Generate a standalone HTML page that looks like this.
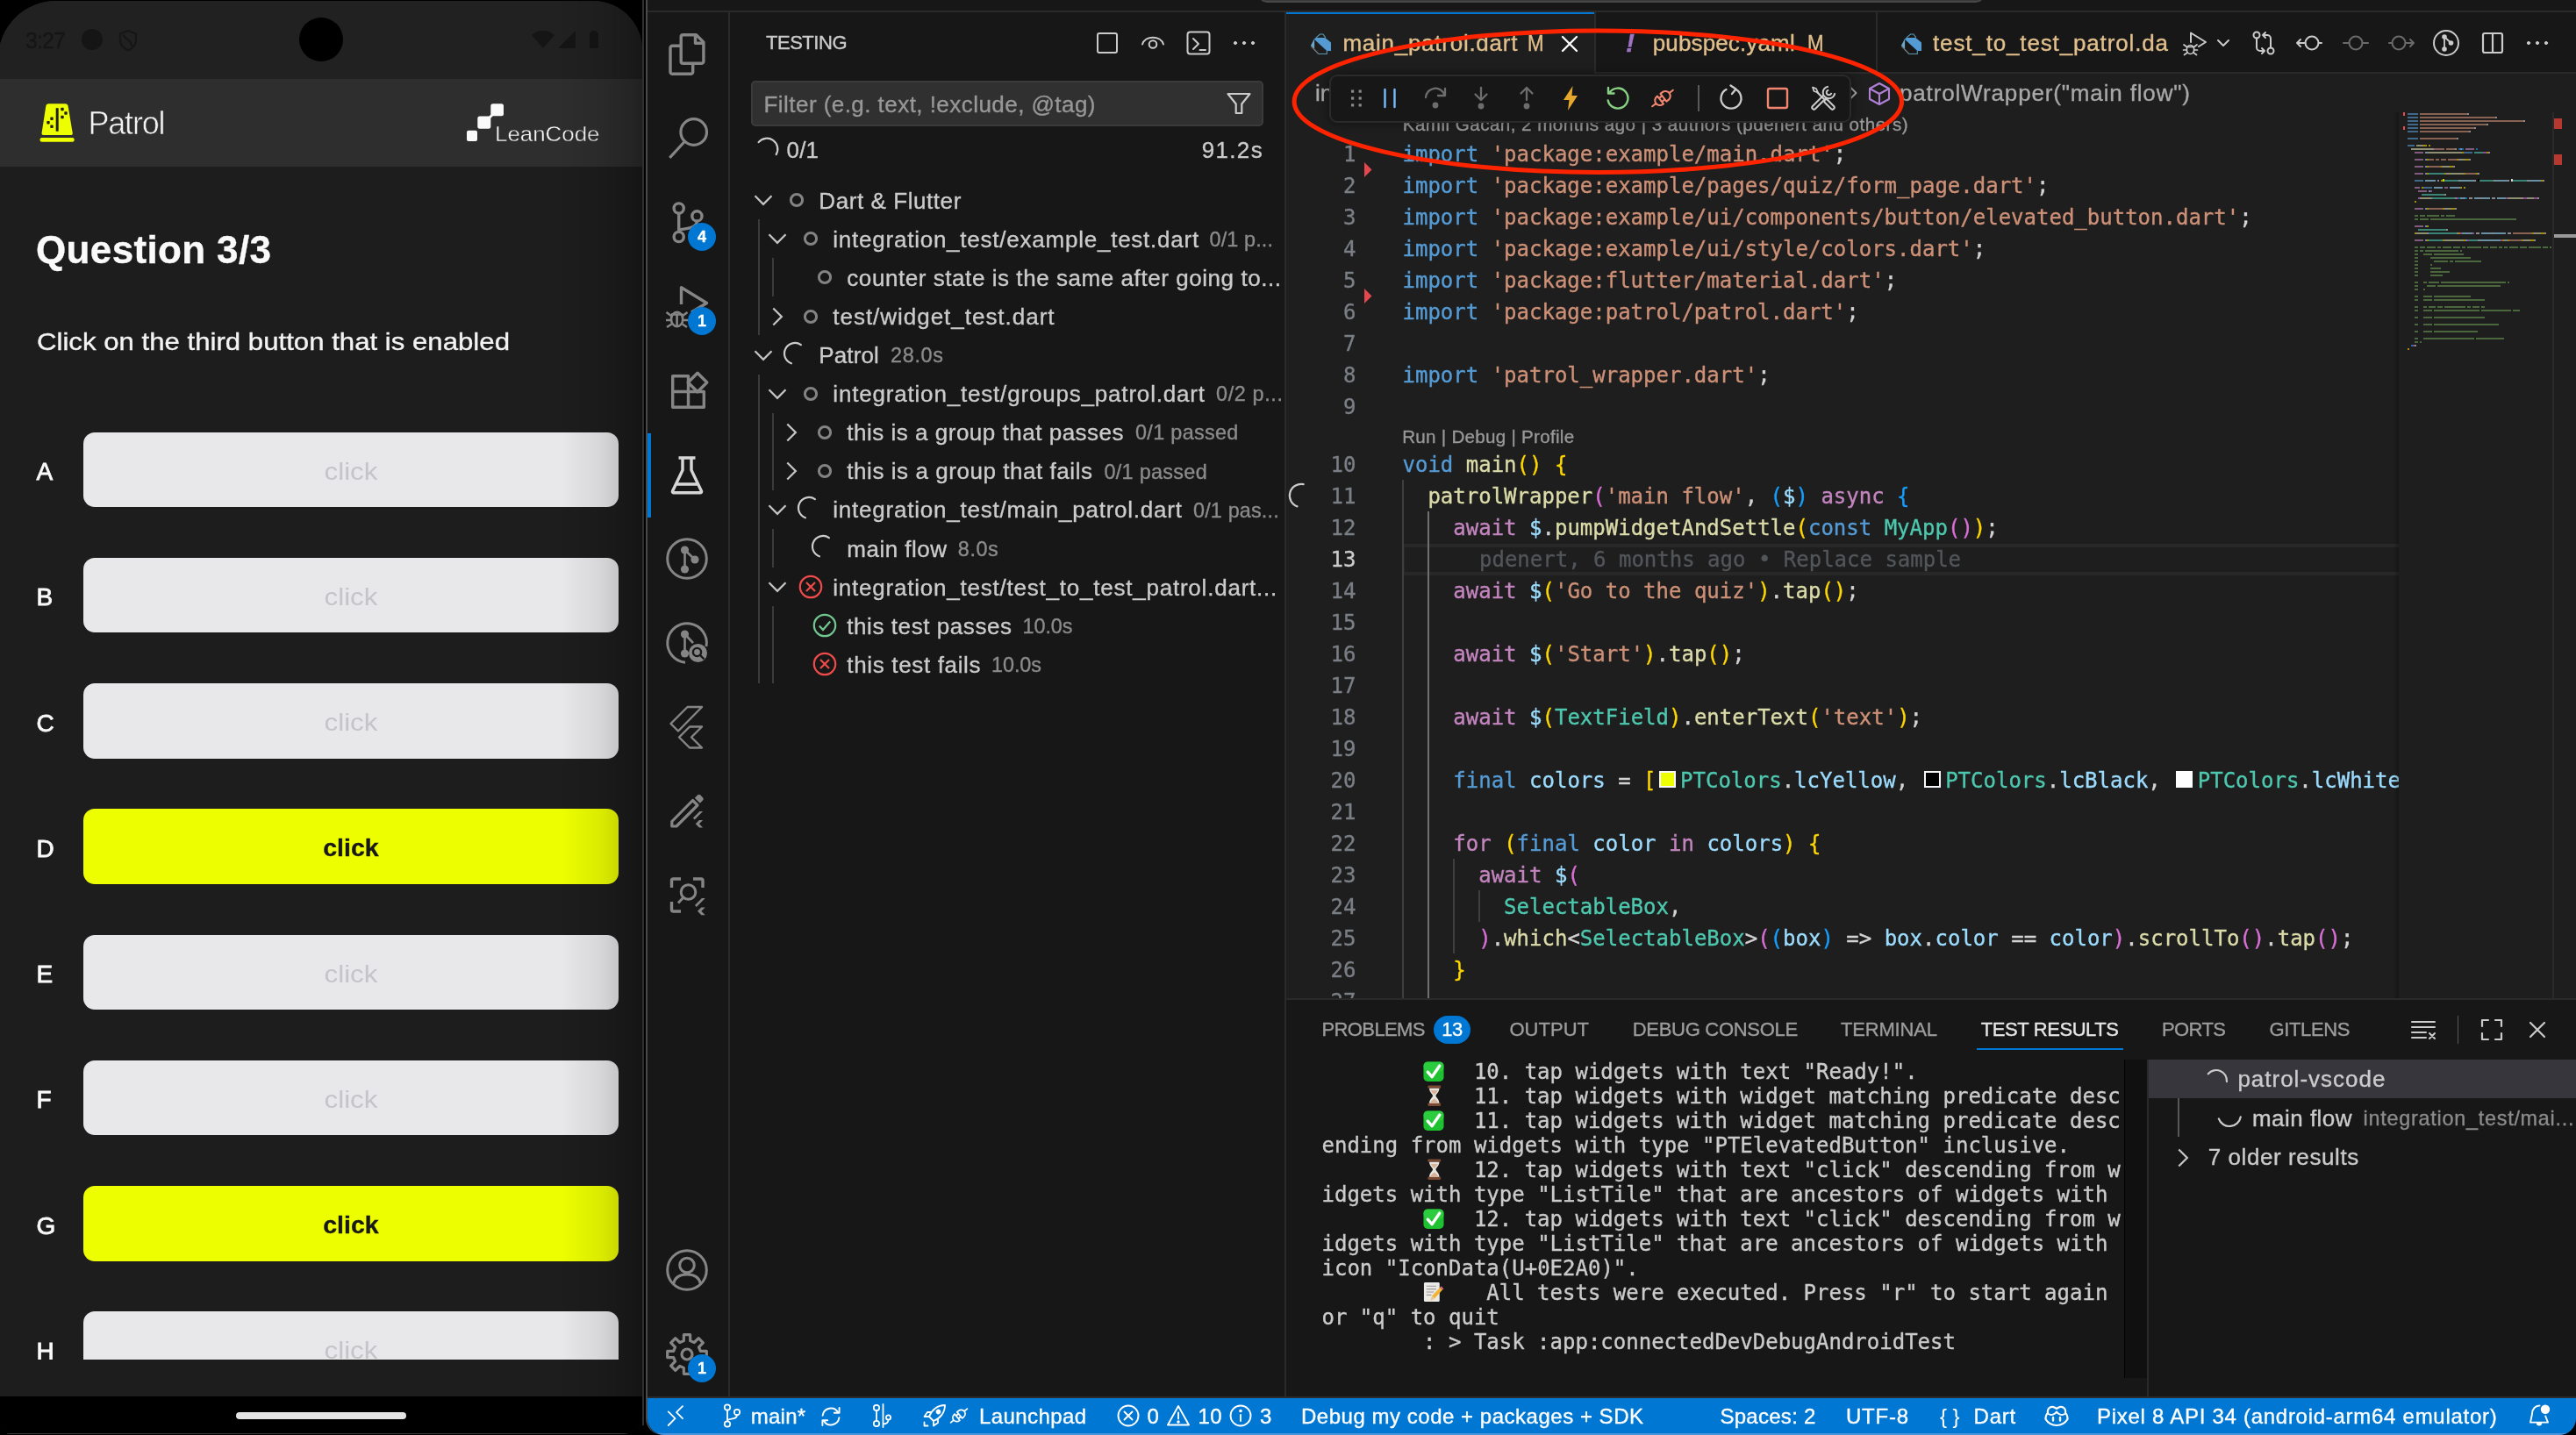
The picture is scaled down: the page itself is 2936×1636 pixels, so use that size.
<!DOCTYPE html>
<html lang="en"><head><meta charset="utf-8"><title>Patrol VS Code extension</title>
<style>
*{box-sizing:border-box;margin:0;padding:0}
html,body{width:2936px;height:1636px;overflow:hidden;background:#000}
body{position:relative;font-family:"Liberation Sans","DejaVu Sans",sans-serif;-webkit-font-smoothing:antialiased}
.t{position:absolute;white-space:pre;line-height:1;-webkit-text-stroke:.35px currentColor}
.r{position:absolute}
.i{position:absolute;overflow:visible}
#root{position:absolute;left:0;top:0;width:2936px;height:1636px;overflow:hidden;will-change:transform;opacity:.999}
#phone{position:absolute;left:-2px;top:1px;width:734px;height:1634px;border-radius:66px 56px 22px 14px;overflow:hidden;background:#1e1e1e}
#phone>*{margin-left:2px;margin-top:-1px}
#win{position:absolute;left:736px;top:0;width:2200px;height:1636px;background:#181818;border-left:2px solid #4a4b4d;border-radius:0 0 19px 19px;overflow:hidden}
</style></head>
<body>
<div id="root">
<div id="phone">
<div class="r" style="left:0px;top:0px;width:736px;height:90px;background:#222222;"></div>
<div class="r" style="left:0px;top:90px;width:736px;height:100px;background:#2f2f2f;"></div>
<div class="t" style="top:33.84px;font-size:25px;color:#171717;letter-spacing:-0.886px;left:29.00px;">3:27</div>
<div class="r" style="left:93px;top:33px;width:24px;height:24px;border-radius:50%;background:#161616"></div>
<svg class="i" style="left:133.00px;top:33.00px;" width="26" height="26" viewBox="0 0 26 26" fill="none"><path d="M13 2 L22 5.5 V13 C22 18 18 22 13 24.5 C8 22 4 18 4 13 V5.5 Z" stroke="#171717" stroke-width="2.2" fill="none"/><path d="M8 6.5 C8 12 18 12 17 20" stroke="#171717" stroke-width="2.2" fill="none"/></svg>
<svg class="i" style="left:605.00px;top:31.00px;" width="28" height="28" viewBox="0 0 28 28" fill="none"><path d="M1 9 C8 2 20 2 27 9 L14 24 Z" fill="#161616"/></svg>
<svg class="i" style="left:634.00px;top:33.00px;" width="24" height="24" viewBox="0 0 24 24" fill="none"><path d="M2 22 L22 2 V22 Z" fill="#161616"/></svg>
<svg class="i" style="left:665.00px;top:33.00px;" width="24" height="24" viewBox="0 0 24 24" fill="none"><path d="M7 4 H9 V2 H15 V4 H17 V22 H7 Z" fill="#161616"/></svg>
<div class="r" style="left:341px;top:20px;width:50px;height:50px;border-radius:50%;background:#000"></div>
<svg class="i" style="left:40px;top:112px" width="52" height="56" viewBox="40 112 52 56"><path d="M55.5 118.2 H74.4 Q77 118.2 77.6 121 L82.8 152 Q83 154 81 154 H49.3 Q47.3 154 47.5 152 L52.3 121 Q52.8 118.2 55.5 118.2 Z" fill="#eeff00"/><rect x="45.5" y="157" width="39.2" height="4.8" rx="2.2" fill="#eeff00"/><rect x="63.7" y="123.2" width="3" height="26.5" fill="#222"/><g fill="#222"><rect x="69.3" y="122.8" width="3.4" height="3.4" rx=".8"/><rect x="73.3" y="127.3" width="3.4" height="3.4" rx=".8"/><rect x="69.3" y="131.8" width="3.4" height="3.4" rx=".8"/><rect x="57.3" y="133.6" width="3.4" height="3.4" rx=".8"/><rect x="53.3" y="138" width="3.4" height="3.4" rx=".8"/><rect x="57.3" y="142.6" width="3.4" height="3.4" rx=".8"/></g></svg>
<div class="t" style="top:122.83px;font-size:36px;color:#f4f4f4;letter-spacing:-1.209px;left:100.50px;-webkit-text-stroke:0.6px #2f2f2f;">Patrol</div>
<svg class="i" style="left:528px;top:114px" width="50" height="52" viewBox="528 114 50 52" fill="#fbfbfb"><rect x="532" y="148.7" width="12" height="12.3" rx="2"/><rect x="544.3" y="132.5" width="15" height="14.3" rx="2.5"/><rect x="559.3" y="118.3" width="14.7" height="14" rx="2.5"/><path d="M556 134 L561 129 L563 131 L558 136 Z"/></svg>
<div class="t" style="top:141.18px;font-size:24px;color:#f4f4f4;transform:scaleX(1.0788);transform-origin:left center;left:564.00px;-webkit-text-stroke:0.4px #2f2f2f;">LeanCode</div>
<div class="r" style="left:0px;top:190px;width:736px;height:1402px;background:#1e1e1e;"></div>
<div class="t" style="top:263.05px;font-size:44px;color:#fbfbfb;font-weight:700;letter-spacing:0.358px;left:41.00px;">Question 3/3</div>
<div class="t" style="top:375.90px;font-size:28px;color:#f4f4f4;transform:scaleX(1.1134);transform-origin:left center;left:41.50px;">Click on the third button that is enabled</div>
<div class="r" style="left:0;top:460px;width:736px;height:1090px;overflow:hidden">
<div class="r" style="left:95px;top:32.60px;width:610px;height:85.6px;border-radius:13px;background:#e9e9ec"></div>
<div class="t" style="top:63.70px;font-size:28px;color:#c6c6ca;transform:scaleX(1.1205);transform-origin:center center;left:-200.00px;width:1200px;text-align:center;-webkit-text-stroke:0;">click</div>
<div class="t" style="top:64.20px;font-size:28px;color:#fbfbfb;left:41.50px;-webkit-text-stroke:.8px #fbfbfb;">A</div>
<div class="r" style="left:95px;top:175.85px;width:610px;height:85.6px;border-radius:13px;background:#e9e9ec"></div>
<div class="t" style="top:206.95px;font-size:28px;color:#c6c6ca;transform:scaleX(1.1205);transform-origin:center center;left:-200.00px;width:1200px;text-align:center;-webkit-text-stroke:0;">click</div>
<div class="t" style="top:207.45px;font-size:28px;color:#fbfbfb;left:41.50px;-webkit-text-stroke:.8px #fbfbfb;">B</div>
<div class="r" style="left:95px;top:319.10px;width:610px;height:85.6px;border-radius:13px;background:#e9e9ec"></div>
<div class="t" style="top:350.20px;font-size:28px;color:#c6c6ca;transform:scaleX(1.1205);transform-origin:center center;left:-200.00px;width:1200px;text-align:center;-webkit-text-stroke:0;">click</div>
<div class="t" style="top:350.70px;font-size:28px;color:#fbfbfb;left:41.50px;-webkit-text-stroke:.8px #fbfbfb;">C</div>
<div class="r" style="left:95px;top:462.35px;width:610px;height:85.6px;border-radius:13px;background:#eeff00"></div>
<div class="t" style="top:492.95px;font-size:28px;color:#191919;font-weight:700;transform:scaleX(1.0197);transform-origin:center center;left:-200.00px;width:1200px;text-align:center;">click</div>
<div class="t" style="top:493.95px;font-size:28px;color:#fbfbfb;left:41.50px;-webkit-text-stroke:.8px #fbfbfb;">D</div>
<div class="r" style="left:95px;top:605.60px;width:610px;height:85.6px;border-radius:13px;background:#e9e9ec"></div>
<div class="t" style="top:636.70px;font-size:28px;color:#c6c6ca;transform:scaleX(1.1205);transform-origin:center center;left:-200.00px;width:1200px;text-align:center;-webkit-text-stroke:0;">click</div>
<div class="t" style="top:637.20px;font-size:28px;color:#fbfbfb;left:41.50px;-webkit-text-stroke:.8px #fbfbfb;">E</div>
<div class="r" style="left:95px;top:748.85px;width:610px;height:85.6px;border-radius:13px;background:#e9e9ec"></div>
<div class="t" style="top:779.95px;font-size:28px;color:#c6c6ca;transform:scaleX(1.1205);transform-origin:center center;left:-200.00px;width:1200px;text-align:center;-webkit-text-stroke:0;">click</div>
<div class="t" style="top:780.45px;font-size:28px;color:#fbfbfb;left:41.50px;-webkit-text-stroke:.8px #fbfbfb;">F</div>
<div class="r" style="left:95px;top:892.10px;width:610px;height:85.6px;border-radius:13px;background:#eeff00"></div>
<div class="t" style="top:922.70px;font-size:28px;color:#191919;font-weight:700;transform:scaleX(1.0197);transform-origin:center center;left:-200.00px;width:1200px;text-align:center;">click</div>
<div class="t" style="top:923.70px;font-size:28px;color:#fbfbfb;left:41.50px;-webkit-text-stroke:.8px #fbfbfb;">G</div>
<div class="r" style="left:95px;top:1035.35px;width:610px;height:85.6px;border-radius:13px;background:#e9e9ec"></div>
<div class="t" style="top:1066.45px;font-size:28px;color:#c6c6ca;transform:scaleX(1.1205);transform-origin:center center;left:-200.00px;width:1200px;text-align:center;-webkit-text-stroke:0;">click</div>
<div class="t" style="top:1066.95px;font-size:28px;color:#fbfbfb;left:41.50px;-webkit-text-stroke:.8px #fbfbfb;">H</div>
</div>
<div class="r" style="left:640px;top:0;width:96px;height:1592px;background:linear-gradient(to right,rgba(0,0,0,0) 0%,rgba(0,0,0,.07) 45%,rgba(0,0,0,.2) 85%,rgba(0,0,0,.32) 100%)"></div>
<div class="r" style="left:0px;top:1592px;width:736px;height:44px;background:#000;"></div>
<div class="r" style="left:269px;top:1610px;width:194px;height:8px;border-radius:4px;background:#e4e4e4"></div>
<div class="r" style="left:8px;top:1634px;width:716px;height:3px;background:#3a3a3a;"></div>
</div>
<div class="r" style="left:732px;top:0px;width:2px;height:1625px;background:#303030;"></div>
<div id="win"></div>
<div class="r" style="left:738px;top:12px;width:2198px;height:2px;background:#2b2b2b;"></div>
<div class="r" style="left:1434px;top:-30px;width:828px;height:33px;border-radius:10px;background:#3a3a3a;border:2px solid #484848"></div>
<div class="r" style="left:830px;top:14px;width:2px;height:1578px;background:#2b2b2b;"></div>
<div class="r" style="left:738px;top:494px;width:4px;height:96px;background:#0078d4;"></div>
<svg class="i" style="left:759px;top:38px" width="48" height="48" viewBox="0 0 48 48" fill="none" stroke="#868686" stroke-width="3.4" stroke-linejoin="round" stroke-linecap="butt"><path d="M17 14.3 H7.3 a2.3 2.3 0 0 0 -2.3 2.3 V44 a2.3 2.3 0 0 0 2.3 2.3 H28.4 a2.3 2.3 0 0 0 2.3 -2.3 V34.5"/><path d="M19.5 1.7 H34.5 L42.9 10.1 V32 a2.3 2.3 0 0 1 -2.3 2.3 H19.5 a2.3 2.3 0 0 1 -2.3 -2.3 V4 a2.3 2.3 0 0 1 2.3 -2.3 Z"/><path d="M33.5 2 V11.3 H42.5"/></svg>
<svg class="i" style="left:759px;top:133px" width="48" height="48" viewBox="0 0 48 48" fill="none" stroke="#868686" stroke-width="3.4" stroke-linejoin="round" stroke-linecap="butt"><circle cx="31.7" cy="17.5" r="14.8" stroke-width="3.2"/><path d="M21.2 28.5 L4.3 46.8" stroke-width="3.2"/></svg>
<svg class="i" style="left:759px;top:229px" width="48" height="48" viewBox="0 0 48 48" fill="none" stroke="#868686" stroke-width="3.4" stroke-linejoin="round" stroke-linecap="butt"><circle cx="14.7" cy="8.5" r="5.6"/><circle cx="14.7" cy="41" r="5.6"/><circle cx="35.4" cy="17.4" r="5.6"/><path d="M14.7 14.1 V35.4"/><path d="M35.4 23 C35.4 30 28 31 14.7 33"/></svg>
<div class="r" style="left:784px;top:254px;width:32px;height:32px;border-radius:50%;background:#0078d4"></div><div class="t" style="top:261.36px;font-size:18px;color:#fff;font-weight:700;left:200.00px;width:1200px;text-align:center;">4</div>
<svg class="i" style="left:759px;top:325px" width="48" height="48" viewBox="0 0 48 48" fill="none" stroke="#868686" stroke-width="3.4" stroke-linejoin="round" stroke-linecap="butt"><path d="M17.5 22 V2.8 L46.5 20.5 L29 31"/><g stroke-width="2.6"><ellipse cx="12.6" cy="39" rx="6.6" ry="8.2"/><path d="M6 33.5 H19.2 M0.5 31 L6 35 M24.5 31 L19.2 35 M0 40 H6 M19.2 40 H25 M1 48 L6.5 44.5 M24 48 L18.7 44.5 M12.6 33.5 V47"/></g></svg>
<div class="r" style="left:784px;top:350px;width:32px;height:32px;border-radius:50%;background:#0078d4"></div><div class="t" style="top:357.36px;font-size:18px;color:#fff;font-weight:700;left:200.00px;width:1200px;text-align:center;">1</div>
<svg class="i" style="left:759px;top:421px" width="48" height="48" viewBox="0 0 48 48" fill="none" stroke="#868686" stroke-width="3.4" stroke-linejoin="round" stroke-linecap="butt"><path d="M7.7 7.7 H25.5 V25.5 H43.3 V43.3 H7.7 Z M7.7 25.5 H25.5 V43.3"/><path d="M36 4.2 L46.8 15 L36 25.8 L25.2 15 Z"/></svg>
<svg class="i" style="left:759px;top:517px" width="48" height="48" viewBox="0 0 48 48" fill="none" stroke="#d7d7d7" stroke-width="3.4" stroke-linejoin="round" stroke-linecap="butt"><path d="M14.5 5 H33.5 M19 5 V19 L7.5 43 a1.2 1.2 0 0 0 1 1.7 H39.5 a1.2 1.2 0 0 0 1 -1.7 L29 19 V5 M11.5 35 H36.5"/></svg>
<svg class="i" style="left:759px;top:613px" width="48" height="48" viewBox="0 0 48 48" fill="none" stroke="#868686" stroke-width="3.4" stroke-linejoin="round" stroke-linecap="butt"><circle cx="24" cy="24" r="22.3" stroke-width="3"/><g fill="#868686" stroke="none"><circle cx="21.5" cy="14" r="4.6"/><circle cx="21.5" cy="36" r="4.6"/><circle cx="33" cy="25" r="4.6"/></g><path d="M21.5 14 V36 M21.5 14 L33 25" stroke-width="2.6"/></svg>
<svg class="i" style="left:759px;top:709px" width="48" height="48" viewBox="0 0 48 48" fill="none" stroke="#868686" stroke-width="3.4" stroke-linejoin="round" stroke-linecap="butt"><path d="M46 28 A22.3 22.3 0 1 0 22 46.2" stroke-width="3"/><g fill="#868686" stroke="none"><circle cx="21.5" cy="14" r="4.6"/><circle cx="21.5" cy="36" r="4.6"/></g><path d="M21.5 14 V36 M21.5 14 L31 24" stroke-width="2.6"/><circle cx="36.5" cy="35.5" r="10.5" fill="#868686" stroke="none"/><circle cx="35.5" cy="34.5" r="4.6" stroke="#181818" stroke-width="2.4"/><path d="M39 38 L43.5 42.5" stroke="#181818" stroke-width="2.4"/></svg>
<svg class="i" style="left:759px;top:806px" width="48" height="48" viewBox="0 0 48 48" fill="none" stroke="#868686" stroke-width="3.4" stroke-linejoin="round" stroke-linecap="butt"><path d="M24.5 2 H41 L14 29.5 L5.5 21 Z M27 24.5 H41 L29 36.5 L41 48.5 H27 L15 36.5 Z" stroke-width="2.4" transform="translate(0 -2)"/></svg>
<svg class="i" style="left:759px;top:901px" width="48" height="48" viewBox="0 0 48 48" fill="none" stroke="#868686" stroke-width="3.4" stroke-linejoin="round" stroke-linecap="butt"><path d="M6.8 35.5 L30.5 11.5 L36 17 L12 41 H6.8 Z" stroke-width="3.2"/><path d="M32.8 8.8 L36 5.6 a2.4 2.4 0 0 1 3.4 0 L42 8.2 a2.4 2.4 0 0 1 0 3.4 L38.8 14.8 Z" fill="#868686" stroke="none"/><g transform="translate(29 24) scale(1.05)" fill="#868686" stroke="none"><path d="M9 0 L12.5 0 L3.5 9 L1.8 7.2 Z"/><path d="M8.5 9.5 L12.5 9.5 L8.5 13.5 L12.5 17.5 L8.5 17.5 L4.5 13.5 Z"/></g></svg>
<svg class="i" style="left:759px;top:996px" width="48" height="48" viewBox="0 0 48 48" fill="none" stroke="#868686" stroke-width="3.4" stroke-linejoin="round" stroke-linecap="butt"><path d="M6.5 16 V8 a2 2 0 0 1 2 -2 H17 M31 6 H40 a2 2 0 0 1 2 2 V16 M6.5 32 V41 a2 2 0 0 0 2 2 H17" stroke-width="3.4"/><circle cx="25.5" cy="21" r="8.3" stroke-width="3"/><path d="M19.5 27.5 L14 33.5" stroke-width="3"/><g transform="translate(31 28) scale(1.1)" fill="#868686" stroke="none"><path d="M9 0 L12.5 0 L3.5 9 L1.8 7.2 Z"/><path d="M8.5 9.5 L12.5 9.5 L8.5 13.5 L12.5 17.5 L8.5 17.5 L4.5 13.5 Z"/></g></svg>
<svg class="i" style="left:759px;top:1424px" width="48" height="48" viewBox="0 0 48 48" fill="none" stroke="#868686" stroke-width="3.4" stroke-linejoin="round" stroke-linecap="butt"><circle cx="24" cy="24" r="22.3" stroke-width="3"/><circle cx="24" cy="18.5" r="8.3" stroke-width="3"/><path d="M8.5 40 C10 31.5 17 29 24 29 C31 29 38 31.5 39.5 40" stroke-width="3"/></svg>
<svg class="i" style="left:759px;top:1520px" width="48" height="48" viewBox="0 0 48 48" fill="none" stroke="#868686" stroke-width="3.4" stroke-linejoin="round" stroke-linecap="butt"><path d="M20.40 1.69 L27.60 1.69 L27.72 8.64 L32.23 10.51 L37.23 5.68 L42.32 10.77 L37.49 15.77 L39.36 20.28 L46.31 20.40 L46.31 27.60 L39.36 27.72 L37.49 32.23 L42.32 37.23 L37.23 42.32 L32.23 37.49 L27.72 39.36 L27.60 46.31 L20.40 46.31 L20.28 39.36 L15.77 37.49 L10.77 42.32 L5.68 37.23 L10.51 32.23 L8.64 27.72 L1.69 27.60 L1.69 20.40 L8.64 20.28 L10.51 15.77 L5.68 10.77 L10.77 5.68 L15.77 10.51 L20.28 8.64 Z" stroke-width="3.2"/><circle cx="24" cy="24" r="6" stroke-width="3.2"/></svg>
<div class="r" style="left:784px;top:1544px;width:32px;height:32px;border-radius:50%;background:#0078d4"></div><div class="t" style="top:1551.36px;font-size:18px;color:#fff;font-weight:700;left:200.00px;width:1200px;text-align:center;">1</div>
<div class="r" style="left:1464px;top:14px;width:2px;height:1578px;background:#2b2b2b;"></div>
<div class="t" style="top:38.38px;font-size:22px;color:#cccccc;letter-spacing:-0.473px;left:873.00px;">TESTING</div>
<svg class="i" style="left:1246px;top:32.7px" width="32" height="32" viewBox="-16 -16 32 32" fill="none" stroke="#cccccc" stroke-width="2" stroke-linejoin="round" stroke-linecap="round"><rect x="-11" y="-11" width="22" height="22" rx="2"/></svg>
<svg class="i" style="left:1298px;top:32.7px" width="32" height="32" viewBox="-16 -16 32 32" fill="none" stroke="#cccccc" stroke-width="2" stroke-linejoin="round" stroke-linecap="round"><path d="M-12 1.5 C-9 -9 9 -9 12 1.5"/><circle cx="0" cy="1.5" r="4.3"/></svg>
<svg class="i" style="left:1350px;top:32.7px" width="32" height="32" viewBox="-16 -16 32 32" fill="none" stroke="#cccccc" stroke-width="2" stroke-linejoin="round" stroke-linecap="round"><rect x="-12.5" y="-12.5" width="25" height="25" rx="3"/><path d="M-6 -5 L0 1 L-6 7 M1.5 8 H8"/></svg>
<svg class="i" style="left:1402px;top:32.7px" width="32" height="32" viewBox="-16 -16 32 32" fill="none" stroke="#cccccc" stroke-width="1" stroke-linejoin="round" stroke-linecap="round"><circle cx="-10" r="1.6" fill="#ccc"/><circle r="1.6" fill="#ccc"/><circle cx="10" r="1.6" fill="#ccc"/></svg>
<div class="r" style="left:856px;top:92px;width:584px;height:52px;border-radius:5px;background:#313131;border:2px solid #3c3c3c"></div>
<div class="t" style="top:106.49px;font-size:26px;color:#989898;letter-spacing:0.452px;left:870.50px;">Filter (e.g. text, !exclude, @tag)</div>
<svg class="i" style="left:1396px;top:102px" width="32" height="32" viewBox="-16 -16 32 32" fill="none" stroke="#cccccc" stroke-width="2.2" stroke-linejoin="round"><path d="M-12.5 -11 H12.5 L3.3 0.5 V11 H-3.3 V0.5 Z"/></svg>
<svg class="i" style="left:857.5px;top:154px" width="32" height="32" viewBox="-16 -16 32 32" fill="none" stroke="#cccccc" stroke-width="2.2" stroke-linecap="round"><path d="M-9.42 -7.91 A12.3 12.3 0 0 1 10.65 6.15"/></svg>
<div class="t" style="top:158.49px;font-size:26px;color:#cccccc;letter-spacing:0.178px;left:896.50px;">0/1</div>
<div class="t" style="top:158.49px;font-size:26px;color:#cccccc;letter-spacing:1.349px;right:1496.00px;">91.2s</div>
<div class="r" style="left:864px;top:250px;width:2px;height:132px;background:#3c3c3c;"></div>
<div class="r" style="left:880px;top:294px;width:2px;height:44px;background:#3c3c3c;"></div>
<div class="r" style="left:864px;top:427px;width:2px;height:352px;background:#3c3c3c;"></div>
<div class="r" style="left:880px;top:471px;width:2px;height:88px;background:#3c3c3c;"></div>
<div class="r" style="left:880px;top:603px;width:2px;height:44px;background:#3c3c3c;"></div>
<div class="r" style="left:880px;top:691px;width:2px;height:88px;background:#3c3c3c;"></div>
<svg class="i" style="left:854px;top:212.2px" width="32" height="32" viewBox="-16 -16 32 32" fill="none" stroke="#c5c5c5" stroke-width="2.3" stroke-linejoin="miter"><path d="M-9.5 -4.7 L0 4.8 L9.5 -4.7"/></svg>
<svg class="i" style="left:896px;top:216.2px" width="24" height="24" viewBox="-12 -12 24 24" fill="none" stroke="#848484" stroke-width="3"><circle r="6.6"/></svg>
<div class="t" style="top:215.69px;font-size:26px;color:#cccccc;letter-spacing:0.570px;left:933.30px;">Dart &amp; Flutter</div>
<svg class="i" style="left:870px;top:256.3px" width="32" height="32" viewBox="-16 -16 32 32" fill="none" stroke="#c5c5c5" stroke-width="2.3" stroke-linejoin="miter"><path d="M-9.5 -4.7 L0 4.8 L9.5 -4.7"/></svg>
<svg class="i" style="left:912px;top:260.3px" width="24" height="24" viewBox="-12 -12 24 24" fill="none" stroke="#848484" stroke-width="3"><circle r="6.6"/></svg>
<div class="t" style="top:259.79px;font-size:26px;color:#cccccc;letter-spacing:0.764px;left:949.30px;">integration_test/example_test.dart</div>
<div class="t" style="top:261.99px;font-size:23.4px;color:#8c8c8c;letter-spacing:0.122px;left:1378.60px;">0/1 p...</div>
<svg class="i" style="left:928px;top:304.4px" width="24" height="24" viewBox="-12 -12 24 24" fill="none" stroke="#848484" stroke-width="3"><circle r="6.6"/></svg>
<div class="t" style="top:303.89px;font-size:26px;color:#cccccc;letter-spacing:0.561px;left:965.30px;">counter state is the same after going to...</div>
<svg class="i" style="left:870px;top:344.5px" width="32" height="32" viewBox="-16 -16 32 32" fill="none" stroke="#c5c5c5" stroke-width="2.3" stroke-linejoin="miter"><path d="M-4.7 -9.5 L4.8 0 L-4.7 9.5"/></svg>
<svg class="i" style="left:912px;top:348.5px" width="24" height="24" viewBox="-12 -12 24 24" fill="none" stroke="#848484" stroke-width="3"><circle r="6.6"/></svg>
<div class="t" style="top:347.99px;font-size:26px;color:#cccccc;letter-spacing:0.976px;left:949.30px;">test/widget_test.dart</div>
<svg class="i" style="left:854px;top:388.6px" width="32" height="32" viewBox="-16 -16 32 32" fill="none" stroke="#c5c5c5" stroke-width="2.3" stroke-linejoin="miter"><path d="M-9.5 -4.7 L0 4.8 L9.5 -4.7"/></svg>
<svg class="i" style="left:890px;top:386.6px" width="32" height="32" viewBox="-16 -16 32 32" fill="none" stroke="#cccccc" stroke-width="2.2" stroke-linecap="round"><path d="M-4.10 11.28 A12 12 0 1 1 6.88 -9.83"/></svg>
<div class="t" style="top:392.09px;font-size:26px;color:#cccccc;letter-spacing:0.116px;left:933.30px;">Patrol</div>
<div class="t" style="top:394.29px;font-size:23.4px;color:#8c8c8c;letter-spacing:0.689px;left:1015.00px;">28.0s</div>
<svg class="i" style="left:870px;top:432.7px" width="32" height="32" viewBox="-16 -16 32 32" fill="none" stroke="#c5c5c5" stroke-width="2.3" stroke-linejoin="miter"><path d="M-9.5 -4.7 L0 4.8 L9.5 -4.7"/></svg>
<svg class="i" style="left:912px;top:436.7px" width="24" height="24" viewBox="-12 -12 24 24" fill="none" stroke="#848484" stroke-width="3"><circle r="6.6"/></svg>
<div class="t" style="top:436.19px;font-size:26px;color:#cccccc;letter-spacing:0.814px;left:949.30px;">integration_test/groups_patrol.dart</div>
<div class="t" style="top:438.39px;font-size:23.4px;color:#8c8c8c;letter-spacing:0.636px;left:1386.00px;">0/2 p...</div>
<svg class="i" style="left:886px;top:476.8px" width="32" height="32" viewBox="-16 -16 32 32" fill="none" stroke="#c5c5c5" stroke-width="2.3" stroke-linejoin="miter"><path d="M-4.7 -9.5 L4.8 0 L-4.7 9.5"/></svg>
<svg class="i" style="left:928px;top:480.8px" width="24" height="24" viewBox="-12 -12 24 24" fill="none" stroke="#848484" stroke-width="3"><circle r="6.6"/></svg>
<div class="t" style="top:480.29px;font-size:26px;color:#cccccc;letter-spacing:0.509px;left:965.30px;">this is a group that passes</div>
<div class="t" style="top:482.49px;font-size:23.4px;color:#8c8c8c;letter-spacing:0.324px;left:1294.00px;">0/1 passed</div>
<svg class="i" style="left:886px;top:520.9px" width="32" height="32" viewBox="-16 -16 32 32" fill="none" stroke="#c5c5c5" stroke-width="2.3" stroke-linejoin="miter"><path d="M-4.7 -9.5 L4.8 0 L-4.7 9.5"/></svg>
<svg class="i" style="left:928px;top:524.9px" width="24" height="24" viewBox="-12 -12 24 24" fill="none" stroke="#848484" stroke-width="3"><circle r="6.6"/></svg>
<div class="t" style="top:524.39px;font-size:26px;color:#cccccc;letter-spacing:0.551px;left:965.30px;">this is a group that fails</div>
<div class="t" style="top:526.59px;font-size:23.4px;color:#8c8c8c;letter-spacing:0.301px;left:1258.50px;">0/1 passed</div>
<svg class="i" style="left:870px;top:565.0px" width="32" height="32" viewBox="-16 -16 32 32" fill="none" stroke="#c5c5c5" stroke-width="2.3" stroke-linejoin="miter"><path d="M-9.5 -4.7 L0 4.8 L9.5 -4.7"/></svg>
<svg class="i" style="left:906px;top:563.0px" width="32" height="32" viewBox="-16 -16 32 32" fill="none" stroke="#cccccc" stroke-width="2.2" stroke-linecap="round"><path d="M-4.10 11.28 A12 12 0 1 1 6.88 -9.83"/></svg>
<div class="t" style="top:568.49px;font-size:26px;color:#cccccc;letter-spacing:0.775px;left:949.30px;">integration_test/main_patrol.dart</div>
<div class="t" style="top:570.69px;font-size:23.4px;color:#8c8c8c;letter-spacing:0.160px;left:1360.00px;">0/1 pas...</div>
<svg class="i" style="left:922px;top:607.1px" width="32" height="32" viewBox="-16 -16 32 32" fill="none" stroke="#cccccc" stroke-width="2.2" stroke-linecap="round"><path d="M-4.10 11.28 A12 12 0 1 1 6.88 -9.83"/></svg>
<div class="t" style="top:612.59px;font-size:26px;color:#cccccc;letter-spacing:0.486px;left:965.30px;">main flow</div>
<div class="t" style="top:614.79px;font-size:23.4px;color:#8c8c8c;letter-spacing:0.590px;left:1091.80px;">8.0s</div>
<svg class="i" style="left:870px;top:653.2px" width="32" height="32" viewBox="-16 -16 32 32" fill="none" stroke="#c5c5c5" stroke-width="2.3" stroke-linejoin="miter"><path d="M-9.5 -4.7 L0 4.8 L9.5 -4.7"/></svg>
<svg class="i" style="left:908px;top:653.2px" width="32" height="32" viewBox="-16 -16 32 32" fill="none" stroke="#f14c4c" stroke-width="2.2"><circle r="12.2"/><path d="M-5 -5 L5 5 M5 -5 L-5 5"/></svg>
<div class="t" style="top:656.69px;font-size:26px;color:#cccccc;letter-spacing:0.776px;left:949.30px;">integration_test/test_to_test_patrol.dart...</div>
<svg class="i" style="left:924px;top:697.3px" width="32" height="32" viewBox="-16 -16 32 32" fill="none" stroke="#73c991" stroke-width="2.2"><circle r="12.2"/><path d="M-6.2 0.5 L-2 5 L6.2 -4.5"/></svg>
<div class="t" style="top:700.79px;font-size:26px;color:#cccccc;letter-spacing:0.567px;left:965.30px;">this test passes</div>
<div class="t" style="top:702.99px;font-size:23.4px;color:#8c8c8c;letter-spacing:-0.086px;left:1165.60px;">10.0s</div>
<svg class="i" style="left:924px;top:741.4000000000001px" width="32" height="32" viewBox="-16 -16 32 32" fill="none" stroke="#f14c4c" stroke-width="2.2"><circle r="12.2"/><path d="M-5 -5 L5 5 M5 -5 L-5 5"/></svg>
<div class="t" style="top:744.89px;font-size:26px;color:#cccccc;letter-spacing:0.654px;left:965.30px;">this test fails</div>
<div class="t" style="top:747.09px;font-size:23.4px;color:#8c8c8c;letter-spacing:-0.061px;left:1130.00px;">10.0s</div>
<div class="r" style="left:1466px;top:84px;width:1470px;height:1055px;background:#1f1f1f;"></div>
<div class="r" style="left:1466px;top:82px;width:1470px;height:2px;background:#2b2b2b;"></div>
<div class="r" style="left:1466px;top:14px;width:351px;height:70px;background:#1f1f1f;"></div>
<div class="r" style="left:1466px;top:14px;width:351px;height:2px;background:#0078d4;"></div>
<div class="r" style="left:1817px;top:14px;width:2px;height:70px;background:#2b2b2b;"></div>
<div class="r" style="left:2138px;top:14px;width:2px;height:70px;background:#2b2b2b;"></div>
<svg class="i" style="left:1489.5px;top:35.5px" width="32" height="30" viewBox="1490 34 32 30"><path d="M1493.9 50.1 L1498.1 42 L1498.1 54.3 Z" fill="#6aa9cc"/><path d="M1498.1 42 L1500 40.9 H1510.3 L1517 46.4 V55.9 H1512.3 L1498.1 43 Z" fill="#559bd4"/><path d="M1500 40.9 L1504.5 37 H1508 L1510.8 40.9 M1498.1 54.3 L1502.8 59.5 H1512.3 V55.9" fill="none" stroke="#5a9bb3" stroke-width="1.1"/><path d="M1494.5 51 L1502.8 59.5" fill="none" stroke="#6f6f6f" stroke-width="1.1"/></svg>
<div class="t" style="top:36.49px;font-size:26px;color:#e2c08d;letter-spacing:0.741px;left:1530.40px;">main_patrol.dart</div>
<div class="t" style="top:36.49px;font-size:26px;color:#e2c08d;transform:scaleX(0.8588);transform-origin:left center;left:1741.00px;">M</div>
<svg class="i" style="left:1773.0px;top:33.5px" width="32" height="32" viewBox="-16.0 -16.0 32 32" fill="none" stroke="#ffffff" stroke-width="2.3" stroke-linejoin="round" stroke-linecap="round"><path d="M-8 -8 L8 8 M8 -8 L-8 8"/></svg>
<div class="t" style="top:33.61px;font-size:30px;color:#a074c4;font-weight:700;left:1853.00px;font-style:italic;">!</div>
<div class="t" style="top:36.49px;font-size:26px;color:#e2c08d;letter-spacing:0.144px;left:1883.70px;">pubspec.yaml</div>
<div class="t" style="top:36.49px;font-size:26px;color:#e2c08d;transform:scaleX(0.8588);transform-origin:left center;left:2060.40px;">M</div>
<svg class="i" style="left:2162.5px;top:35.5px" width="32" height="30" viewBox="1490 34 32 30"><path d="M1493.9 50.1 L1498.1 42 L1498.1 54.3 Z" fill="#6aa9cc"/><path d="M1498.1 42 L1500 40.9 H1510.3 L1517 46.4 V55.9 H1512.3 L1498.1 43 Z" fill="#559bd4"/><path d="M1500 40.9 L1504.5 37 H1508 L1510.8 40.9 M1498.1 54.3 L1502.8 59.5 H1512.3 V55.9" fill="none" stroke="#5a9bb3" stroke-width="1.1"/><path d="M1494.5 51 L1502.8 59.5" fill="none" stroke="#6f6f6f" stroke-width="1.1"/></svg>
<div class="t" style="top:36.49px;font-size:26px;color:#e2c08d;letter-spacing:0.854px;left:2203.00px;">test_to_test_patrol.da</div>
<svg class="i" style="left:2487.0px;top:32.7px" width="32" height="32" viewBox="-16.0 -16.0 32 32" fill="none" stroke="#cccccc" stroke-width="2" stroke-linejoin="round" stroke-linecap="round"><path d="M-6 -1 V-11.5 L11 -1 L3 4"/><g stroke-width="1.7"><ellipse cx="-6.5" cy="7.5" rx="4.2" ry="5"/><path d="M-10.5 4.5 H-2.3 M-14 2 L-10.5 4.5 M1 2 L-2.3 4.5 M-14.5 8 H-10.7 M-2.3 8 H1.5 M-13.5 13.5 L-10 11 M0.5 13.5 L-3 11"/></g></svg>
<svg class="i" style="left:2518.0px;top:32.7px" width="32" height="32" viewBox="-16.0 -16.0 32 32" fill="none" stroke="#cccccc" stroke-width="2" stroke-linejoin="round" stroke-linecap="round"><path d="M-6 -3 L0 3 L6 -3"/></svg>
<svg class="i" style="left:2564.0px;top:32.7px" width="32" height="32" viewBox="-16.0 -16.0 32 32" fill="none" stroke="#cccccc" stroke-width="2" stroke-linejoin="round" stroke-linecap="round"><circle cx="-8" cy="-9" r="3.5"/><circle cx="8" cy="9" r="3.5"/><path d="M-8 -5.5 V5 a4 4 0 0 0 4 4 H1 M-2 6 L1 9 L-2 12 M8 5.5 V-5 a4 4 0 0 0 -4 -4 H-1 M2 -12 L-1 -9 L2 -6"/></svg>
<svg class="i" style="left:2616.0px;top:32.7px" width="32" height="32" viewBox="-16.0 -16.0 32 32" fill="none" stroke="#cccccc" stroke-width="2" stroke-linejoin="round" stroke-linecap="round"><circle cx="3" cy="0" r="7.5"/><path d="M-4.5 0 H-14 M-10 -4 L-14 0 L-10 4 M10.5 0 H14"/></svg>
<svg class="i" style="left:2669.0px;top:32.7px" width="32" height="32" viewBox="-16.0 -16.0 32 32" fill="none" stroke="#6b6b6b" stroke-width="2" stroke-linejoin="round" stroke-linecap="round"><circle r="7.5"/><path d="M-7.5 0 H-14 M7.5 0 H14"/></svg>
<svg class="i" style="left:2721.0px;top:32.7px" width="32" height="32" viewBox="-16.0 -16.0 32 32" fill="none" stroke="#6b6b6b" stroke-width="2" stroke-linejoin="round" stroke-linecap="round"><circle cx="-3" cy="0" r="7.5"/><path d="M4.5 0 H14 M10 -4 L14 0 L10 4 M-10.5 0 H-14"/></svg>
<svg class="i" style="left:2772.0px;top:32.7px" width="32" height="32" viewBox="-16.0 -16.0 32 32" fill="none" stroke="#cccccc" stroke-width="2" stroke-linejoin="round" stroke-linecap="round"><circle r="14"/><g fill="#cccccc" stroke="none"><circle cx="-2" cy="-7" r="2.8"/><circle cx="-2" cy="7" r="2.8"/><circle cx="5.5" cy="0" r="2.8"/></g><path d="M-2 -7 V7 M-2 -7 L5.5 0" stroke-width="1.8"/></svg>
<svg class="i" style="left:2825.0px;top:32.7px" width="32" height="32" viewBox="-16.0 -16.0 32 32" fill="none" stroke="#cccccc" stroke-width="2.2" stroke-linejoin="round" stroke-linecap="round"><rect x="-11" y="-11" width="22" height="22" rx="2"/><path d="M0 -11 V11"/></svg>
<svg class="i" style="left:2876.0px;top:32.7px" width="32" height="32" viewBox="-16.0 -16.0 32 32" fill="none" stroke="#cccccc" stroke-width="1" stroke-linejoin="round" stroke-linecap="round"><circle cx="-10" r="1.6" fill="#ccc"/><circle r="1.6" fill="#ccc"/><circle cx="10" r="1.6" fill="#ccc"/></svg>
<div class="t" style="top:92.99px;font-size:26px;color:#a9a9a9;left:1499.00px;">integration_test</div>
<svg class="i" style="left:2096.0px;top:90.0px" width="32" height="32" viewBox="-16.0 -16.0 32 32" fill="none" stroke="#a9a9a9" stroke-width="2" stroke-linejoin="round" stroke-linecap="round"><path d="M-3.5 -7 L3.5 0 L-3.5 7"/></svg>
<svg class="i" style="left:2126.0px;top:91.0px" width="32" height="32" viewBox="-16.0 -16.0 32 32" fill="none" stroke="#b180d7" stroke-width="2.1" stroke-linejoin="round" stroke-linecap="round"><path d="M0 -12 L11 -6 V6 L0 12 L-11 6 V-6 Z M-11 -6 L0 0 L11 -6 M0 0 V12"/></svg>
<div class="t" style="top:92.99px;font-size:26px;color:#a9a9a9;letter-spacing:0.846px;left:2165.00px;">patrolWrapper("main flow")</div>
<div class="t" style="top:131.86px;font-size:20.6px;color:#999999;letter-spacing:0.469px;left:1598.70px;">Kamil Gacan, 2 months ago | 3 authors (pdenert and others)</div>
<div class="t" style="top:487.56px;font-size:20.6px;color:#999999;letter-spacing:0.276px;left:1598.20px;">Run | Debug | Profile</div>
<div class="r" style="left:1466px;top:84px;width:1268px;height:1055px;overflow:hidden">
<div class="r" style="left:132.5px;top:536.2px;width:1200px;height:36px;border-top:4px solid #292929;border-bottom:4px solid #292929;border-left:2px solid #292929"></div>
<div class="r" style="left:132px;top:463.20000000000005px;width:2px;height:648.0px;background:#404040"></div>
<div class="r" style="left:161px;top:499.20000000000005px;width:2px;height:612.0px;background:#707070"></div>
<div class="r" style="left:190px;top:895.2px;width:2px;height:108.0px;background:#404040"></div>
<div class="r" style="left:219px;top:931.2px;width:2px;height:36.0px;background:#404040"></div>
<div class="t" style="top:80.00px;font-size:24px;color:#d4d4d4;font-family:'DejaVu Sans Mono','Liberation Mono',monospace;letter-spacing:0.001px;left:132.50px;"><span style="color:#569cd6">import</span><span style="color:#d4d4d4"> </span><span style="color:#ce9178">'package:example/main.dart'</span><span style="color:#d4d4d4">;</span></div>
<div class="t" style="top:116.00px;font-size:24px;color:#d4d4d4;font-family:'DejaVu Sans Mono','Liberation Mono',monospace;letter-spacing:0.001px;left:132.50px;"><span style="color:#569cd6">import</span><span style="color:#d4d4d4"> </span><span style="color:#ce9178">'package:example/pages/quiz/form_page.dart'</span><span style="color:#d4d4d4">;</span></div>
<div class="t" style="top:152.00px;font-size:24px;color:#d4d4d4;font-family:'DejaVu Sans Mono','Liberation Mono',monospace;letter-spacing:0.001px;left:132.50px;"><span style="color:#569cd6">import</span><span style="color:#d4d4d4"> </span><span style="color:#ce9178">'package:example/ui/components/button/elevated_button.dart'</span><span style="color:#d4d4d4">;</span></div>
<div class="t" style="top:188.00px;font-size:24px;color:#d4d4d4;font-family:'DejaVu Sans Mono','Liberation Mono',monospace;letter-spacing:0.001px;left:132.50px;"><span style="color:#569cd6">import</span><span style="color:#d4d4d4"> </span><span style="color:#ce9178">'package:example/ui/style/colors.dart'</span><span style="color:#d4d4d4">;</span></div>
<div class="t" style="top:224.00px;font-size:24px;color:#d4d4d4;font-family:'DejaVu Sans Mono','Liberation Mono',monospace;letter-spacing:0.001px;left:132.50px;"><span style="color:#569cd6">import</span><span style="color:#d4d4d4"> </span><span style="color:#ce9178">'package:flutter/material.dart'</span><span style="color:#d4d4d4">;</span></div>
<div class="t" style="top:260.00px;font-size:24px;color:#d4d4d4;font-family:'DejaVu Sans Mono','Liberation Mono',monospace;letter-spacing:0.001px;left:132.50px;"><span style="color:#569cd6">import</span><span style="color:#d4d4d4"> </span><span style="color:#ce9178">'package:patrol/patrol.dart'</span><span style="color:#d4d4d4">;</span></div>
<div class="t" style="top:332.00px;font-size:24px;color:#d4d4d4;font-family:'DejaVu Sans Mono','Liberation Mono',monospace;letter-spacing:0.001px;left:132.50px;"><span style="color:#569cd6">import</span><span style="color:#d4d4d4"> </span><span style="color:#ce9178">'patrol_wrapper.dart'</span><span style="color:#d4d4d4">;</span></div>
<div class="t" style="top:434.20px;font-size:24px;color:#d4d4d4;font-family:'DejaVu Sans Mono','Liberation Mono',monospace;letter-spacing:0.001px;left:132.50px;"><span style="color:#569cd6">void</span><span style="color:#d4d4d4"> </span><span style="color:#dcdcaa">main</span><span style="color:#ffd700">()</span><span style="color:#d4d4d4"> </span><span style="color:#ffd700">{</span></div>
<div class="t" style="top:470.20px;font-size:24px;color:#d4d4d4;font-family:'DejaVu Sans Mono','Liberation Mono',monospace;letter-spacing:0.001px;left:132.50px;"><span style="color:#d4d4d4">  </span><span style="color:#dcdcaa">patrolWrapper</span><span style="color:#da70d6">(</span><span style="color:#ce9178">'main flow'</span><span style="color:#d4d4d4">, </span><span style="color:#179fff">(</span><span style="color:#9cdcfe">$</span><span style="color:#179fff">)</span><span style="color:#d4d4d4"> </span><span style="color:#c586c0">async</span><span style="color:#d4d4d4"> </span><span style="color:#179fff">{</span></div>
<div class="t" style="top:506.20px;font-size:24px;color:#d4d4d4;font-family:'DejaVu Sans Mono','Liberation Mono',monospace;letter-spacing:0.001px;left:132.50px;"><span style="color:#d4d4d4">    </span><span style="color:#c586c0">await</span><span style="color:#d4d4d4"> </span><span style="color:#9cdcfe">$</span><span style="color:#d4d4d4">.</span><span style="color:#dcdcaa">pumpWidgetAndSettle</span><span style="color:#ffd700">(</span><span style="color:#569cd6">const</span><span style="color:#d4d4d4"> </span><span style="color:#4ec9b0">MyApp</span><span style="color:#da70d6">()</span><span style="color:#ffd700">)</span><span style="color:#d4d4d4">;</span></div>
<div class="t" style="top:578.20px;font-size:24px;color:#d4d4d4;font-family:'DejaVu Sans Mono','Liberation Mono',monospace;letter-spacing:0.001px;left:132.50px;"><span style="color:#d4d4d4">    </span><span style="color:#c586c0">await</span><span style="color:#d4d4d4"> </span><span style="color:#9cdcfe">$</span><span style="color:#ffd700">(</span><span style="color:#ce9178">'Go to the quiz'</span><span style="color:#ffd700">)</span><span style="color:#d4d4d4">.</span><span style="color:#dcdcaa">tap</span><span style="color:#ffd700">()</span><span style="color:#d4d4d4">;</span></div>
<div class="t" style="top:650.20px;font-size:24px;color:#d4d4d4;font-family:'DejaVu Sans Mono','Liberation Mono',monospace;letter-spacing:0.001px;left:132.50px;"><span style="color:#d4d4d4">    </span><span style="color:#c586c0">await</span><span style="color:#d4d4d4"> </span><span style="color:#9cdcfe">$</span><span style="color:#ffd700">(</span><span style="color:#ce9178">'Start'</span><span style="color:#ffd700">)</span><span style="color:#d4d4d4">.</span><span style="color:#dcdcaa">tap</span><span style="color:#ffd700">()</span><span style="color:#d4d4d4">;</span></div>
<div class="t" style="top:722.20px;font-size:24px;color:#d4d4d4;font-family:'DejaVu Sans Mono','Liberation Mono',monospace;letter-spacing:0.001px;left:132.50px;"><span style="color:#d4d4d4">    </span><span style="color:#c586c0">await</span><span style="color:#d4d4d4"> </span><span style="color:#9cdcfe">$</span><span style="color:#ffd700">(</span><span style="color:#4ec9b0">TextField</span><span style="color:#ffd700">)</span><span style="color:#d4d4d4">.</span><span style="color:#dcdcaa">enterText</span><span style="color:#ffd700">(</span><span style="color:#ce9178">'text'</span><span style="color:#ffd700">)</span><span style="color:#d4d4d4">;</span></div>
<div class="t" style="top:794.20px;font-size:24px;color:#d4d4d4;font-family:'DejaVu Sans Mono','Liberation Mono',monospace;letter-spacing:0.001px;left:132.50px;"><span style="color:#d4d4d4">    </span><span style="color:#569cd6">final</span><span style="color:#d4d4d4"> </span><span style="color:#9cdcfe">colors</span><span style="color:#d4d4d4"> = </span><span style="color:#ffd700">[</span><span style="display:inline-block;width:19px;height:19px;margin:0 5.5px 0 3px;vertical-align:0.3px;background:#eeff00;border:2px solid #f6f6fb"></span><span style="color:#4ec9b0">PTColors</span><span style="color:#d4d4d4">.</span><span style="color:#9cdcfe">lcYellow</span><span style="color:#d4d4d4">, </span><span style="display:inline-block;width:19px;height:19px;margin:0 5.5px 0 3px;vertical-align:0.3px;background:#000000;border:2px solid #f6f6fb"></span><span style="color:#4ec9b0">PTColors</span><span style="color:#d4d4d4">.</span><span style="color:#9cdcfe">lcBlack</span><span style="color:#d4d4d4">, </span><span style="display:inline-block;width:19px;height:19px;margin:0 5.5px 0 3px;vertical-align:0.3px;background:#ffffff;border:2px solid #ffffff"></span><span style="color:#4ec9b0">PTColors</span><span style="color:#d4d4d4">.</span><span style="color:#9cdcfe">lcWhite</span><span style="color:#ffd700">]</span><span style="color:#d4d4d4">;</span></div>
<div class="t" style="top:866.20px;font-size:24px;color:#d4d4d4;font-family:'DejaVu Sans Mono','Liberation Mono',monospace;letter-spacing:0.001px;left:132.50px;"><span style="color:#d4d4d4">    </span><span style="color:#c586c0">for</span><span style="color:#d4d4d4"> </span><span style="color:#ffd700">(</span><span style="color:#569cd6">final</span><span style="color:#d4d4d4"> </span><span style="color:#9cdcfe">color</span><span style="color:#d4d4d4"> </span><span style="color:#c586c0">in</span><span style="color:#d4d4d4"> </span><span style="color:#9cdcfe">colors</span><span style="color:#ffd700">)</span><span style="color:#d4d4d4"> </span><span style="color:#ffd700">{</span></div>
<div class="t" style="top:902.20px;font-size:24px;color:#d4d4d4;font-family:'DejaVu Sans Mono','Liberation Mono',monospace;letter-spacing:0.001px;left:132.50px;"><span style="color:#d4d4d4">      </span><span style="color:#c586c0">await</span><span style="color:#d4d4d4"> </span><span style="color:#9cdcfe">$</span><span style="color:#da70d6">(</span></div>
<div class="t" style="top:938.20px;font-size:24px;color:#d4d4d4;font-family:'DejaVu Sans Mono','Liberation Mono',monospace;letter-spacing:0.001px;left:132.50px;"><span style="color:#d4d4d4">        </span><span style="color:#4ec9b0">SelectableBox</span><span style="color:#d4d4d4">,</span></div>
<div class="t" style="top:974.20px;font-size:24px;color:#d4d4d4;font-family:'DejaVu Sans Mono','Liberation Mono',monospace;letter-spacing:0.001px;left:132.50px;"><span style="color:#d4d4d4">      </span><span style="color:#da70d6">)</span><span style="color:#d4d4d4">.</span><span style="color:#dcdcaa">which</span><span style="color:#d4d4d4">&lt;</span><span style="color:#4ec9b0">SelectableBox</span><span style="color:#d4d4d4">&gt;</span><span style="color:#da70d6">(</span><span style="color:#179fff">(</span><span style="color:#9cdcfe">box</span><span style="color:#179fff">)</span><span style="color:#d4d4d4"> =&gt; </span><span style="color:#9cdcfe">box</span><span style="color:#d4d4d4">.</span><span style="color:#9cdcfe">color</span><span style="color:#d4d4d4"> == </span><span style="color:#9cdcfe">color</span><span style="color:#da70d6">)</span><span style="color:#d4d4d4">.</span><span style="color:#dcdcaa">scrollTo</span><span style="color:#da70d6">()</span><span style="color:#d4d4d4">.</span><span style="color:#dcdcaa">tap</span><span style="color:#da70d6">()</span><span style="color:#d4d4d4">;</span></div>
<div class="t" style="top:1010.20px;font-size:24px;color:#d4d4d4;font-family:'DejaVu Sans Mono','Liberation Mono',monospace;letter-spacing:0.001px;left:132.50px;"><span style="color:#d4d4d4">    </span><span style="color:#ffd700">}</span></div>
<div class="t" style="top:542.20px;font-size:24px;color:#53565a;font-family:'DejaVu Sans Mono','Liberation Mono',monospace;left:220.00px;">pdenert, 6 months ago • Replace sample</div>
</div>
<div class="r" style="left:0;top:0;width:2936px;height:1139px;overflow:hidden"><div class="t" style="top:1130.20px;font-size:24px;color:#7b7f86;font-family:'DejaVu Sans Mono','Liberation Mono',monospace;right:1390.50px;">27</div></div>
<div class="t" style="top:164.00px;font-size:24px;color:#7b7f86;font-family:'DejaVu Sans Mono','Liberation Mono',monospace;right:1390.50px;">1</div>
<div class="t" style="top:200.00px;font-size:24px;color:#7b7f86;font-family:'DejaVu Sans Mono','Liberation Mono',monospace;right:1390.50px;">2</div>
<div class="t" style="top:236.00px;font-size:24px;color:#7b7f86;font-family:'DejaVu Sans Mono','Liberation Mono',monospace;right:1390.50px;">3</div>
<div class="t" style="top:272.00px;font-size:24px;color:#7b7f86;font-family:'DejaVu Sans Mono','Liberation Mono',monospace;right:1390.50px;">4</div>
<div class="t" style="top:308.00px;font-size:24px;color:#7b7f86;font-family:'DejaVu Sans Mono','Liberation Mono',monospace;right:1390.50px;">5</div>
<div class="t" style="top:344.00px;font-size:24px;color:#7b7f86;font-family:'DejaVu Sans Mono','Liberation Mono',monospace;right:1390.50px;">6</div>
<div class="t" style="top:380.00px;font-size:24px;color:#7b7f86;font-family:'DejaVu Sans Mono','Liberation Mono',monospace;right:1390.50px;">7</div>
<div class="t" style="top:416.00px;font-size:24px;color:#7b7f86;font-family:'DejaVu Sans Mono','Liberation Mono',monospace;right:1390.50px;">8</div>
<div class="t" style="top:452.00px;font-size:24px;color:#7b7f86;font-family:'DejaVu Sans Mono','Liberation Mono',monospace;right:1390.50px;">9</div>
<div class="t" style="top:518.20px;font-size:24px;color:#7b7f86;font-family:'DejaVu Sans Mono','Liberation Mono',monospace;right:1390.50px;">10</div>
<div class="t" style="top:554.20px;font-size:24px;color:#7b7f86;font-family:'DejaVu Sans Mono','Liberation Mono',monospace;right:1390.50px;">11</div>
<div class="t" style="top:590.20px;font-size:24px;color:#7b7f86;font-family:'DejaVu Sans Mono','Liberation Mono',monospace;right:1390.50px;">12</div>
<div class="t" style="top:626.20px;font-size:24px;color:#cccccc;font-family:'DejaVu Sans Mono','Liberation Mono',monospace;right:1390.50px;">13</div>
<div class="t" style="top:662.20px;font-size:24px;color:#7b7f86;font-family:'DejaVu Sans Mono','Liberation Mono',monospace;right:1390.50px;">14</div>
<div class="t" style="top:698.20px;font-size:24px;color:#7b7f86;font-family:'DejaVu Sans Mono','Liberation Mono',monospace;right:1390.50px;">15</div>
<div class="t" style="top:734.20px;font-size:24px;color:#7b7f86;font-family:'DejaVu Sans Mono','Liberation Mono',monospace;right:1390.50px;">16</div>
<div class="t" style="top:770.20px;font-size:24px;color:#7b7f86;font-family:'DejaVu Sans Mono','Liberation Mono',monospace;right:1390.50px;">17</div>
<div class="t" style="top:806.20px;font-size:24px;color:#7b7f86;font-family:'DejaVu Sans Mono','Liberation Mono',monospace;right:1390.50px;">18</div>
<div class="t" style="top:842.20px;font-size:24px;color:#7b7f86;font-family:'DejaVu Sans Mono','Liberation Mono',monospace;right:1390.50px;">19</div>
<div class="t" style="top:878.20px;font-size:24px;color:#7b7f86;font-family:'DejaVu Sans Mono','Liberation Mono',monospace;right:1390.50px;">20</div>
<div class="t" style="top:914.20px;font-size:24px;color:#7b7f86;font-family:'DejaVu Sans Mono','Liberation Mono',monospace;right:1390.50px;">21</div>
<div class="t" style="top:950.20px;font-size:24px;color:#7b7f86;font-family:'DejaVu Sans Mono','Liberation Mono',monospace;right:1390.50px;">22</div>
<div class="t" style="top:986.20px;font-size:24px;color:#7b7f86;font-family:'DejaVu Sans Mono','Liberation Mono',monospace;right:1390.50px;">23</div>
<div class="t" style="top:1022.20px;font-size:24px;color:#7b7f86;font-family:'DejaVu Sans Mono','Liberation Mono',monospace;right:1390.50px;">24</div>
<div class="t" style="top:1058.20px;font-size:24px;color:#7b7f86;font-family:'DejaVu Sans Mono','Liberation Mono',monospace;right:1390.50px;">25</div>
<div class="t" style="top:1094.20px;font-size:24px;color:#7b7f86;font-family:'DejaVu Sans Mono','Liberation Mono',monospace;right:1390.50px;">26</div>
<svg class="i" style="left:1554px;top:184px" width="12" height="20" viewBox="0 0 12 20"><path d="M1 1 L9.5 9.5 L1 18 Z" fill="#e5484d"/></svg>
<svg class="i" style="left:1554px;top:328px" width="12" height="20" viewBox="0 0 12 20"><path d="M1 1 L9.5 9.5 L1 18 Z" fill="#e5484d"/></svg>
<svg class="i" style="left:1467.4px;top:549.4px" width="32" height="32" viewBox="-16 -16 32 32" fill="none" stroke="#cccccc" stroke-width="2.2" stroke-linecap="round"><path d="M-4.51 12.40 A13.2 13.2 0 0 1 2.74 -12.91"/></svg>
<div class="r" style="left:2728px;top:128px;width:6px;height:1011px;background:linear-gradient(to right,rgba(0,0,0,0),rgba(0,0,0,.28))"></div>
<svg class="i" style="left:2734px;top:84px" width="176" height="1055" viewBox="2734 84 176 1055" shape-rendering="crispEdges">
<rect x="2744" y="128.5" width="12" height="2.4" fill="#569cd6" opacity=".6"/>
<rect x="2758" y="128.5" width="54" height="2.4" fill="#ce9178" opacity=".6"/>
<rect x="2812" y="128.5" width="2" height="2.4" fill="#d4d4d4" opacity=".6"/>
<rect x="2744" y="132.5" width="12" height="2.4" fill="#569cd6" opacity=".6"/>
<rect x="2758" y="132.5" width="86" height="2.4" fill="#ce9178" opacity=".6"/>
<rect x="2844" y="132.5" width="2" height="2.4" fill="#d4d4d4" opacity=".6"/>
<rect x="2744" y="136.5" width="12" height="2.4" fill="#569cd6" opacity=".6"/>
<rect x="2758" y="136.5" width="118" height="2.4" fill="#ce9178" opacity=".6"/>
<rect x="2876" y="136.5" width="2" height="2.4" fill="#d4d4d4" opacity=".6"/>
<rect x="2744" y="140.5" width="12" height="2.4" fill="#569cd6" opacity=".6"/>
<rect x="2758" y="140.5" width="76" height="2.4" fill="#ce9178" opacity=".6"/>
<rect x="2834" y="140.5" width="2" height="2.4" fill="#d4d4d4" opacity=".6"/>
<rect x="2744" y="144.5" width="12" height="2.4" fill="#569cd6" opacity=".6"/>
<rect x="2758" y="144.5" width="62" height="2.4" fill="#ce9178" opacity=".6"/>
<rect x="2820" y="144.5" width="2" height="2.4" fill="#d4d4d4" opacity=".6"/>
<rect x="2744" y="148.5" width="12" height="2.4" fill="#569cd6" opacity=".6"/>
<rect x="2758" y="148.5" width="56" height="2.4" fill="#ce9178" opacity=".6"/>
<rect x="2814" y="148.5" width="2" height="2.4" fill="#d4d4d4" opacity=".6"/>
<rect x="2744" y="156.5" width="12" height="2.4" fill="#569cd6" opacity=".6"/>
<rect x="2758" y="156.5" width="42" height="2.4" fill="#ce9178" opacity=".6"/>
<rect x="2800" y="156.5" width="2" height="2.4" fill="#d4d4d4" opacity=".6"/>
<rect x="2744" y="164.5" width="8" height="2.4" fill="#569cd6" opacity=".6"/>
<rect x="2754" y="164.5" width="8" height="2.4" fill="#dcdcaa" opacity=".6"/>
<rect x="2762" y="164.5" width="4" height="2.4" fill="#ffd700" opacity=".6"/>
<rect x="2768" y="164.5" width="2" height="2.4" fill="#ffd700" opacity=".6"/>
<rect x="2748" y="168.5" width="26" height="2.4" fill="#dcdcaa" opacity=".6"/>
<rect x="2774" y="168.5" width="2" height="2.4" fill="#da70d6" opacity=".6"/>
<rect x="2776" y="168.5" width="10" height="2.4" fill="#ce9178" opacity=".6"/>
<rect x="2788" y="168.5" width="10" height="2.4" fill="#ce9178" opacity=".6"/>
<rect x="2798" y="168.5" width="2" height="2.4" fill="#d4d4d4" opacity=".6"/>
<rect x="2802" y="168.5" width="2" height="2.4" fill="#179fff" opacity=".6"/>
<rect x="2804" y="168.5" width="2" height="2.4" fill="#9cdcfe" opacity=".6"/>
<rect x="2806" y="168.5" width="2" height="2.4" fill="#179fff" opacity=".6"/>
<rect x="2810" y="168.5" width="10" height="2.4" fill="#c586c0" opacity=".6"/>
<rect x="2822" y="168.5" width="2" height="2.4" fill="#179fff" opacity=".6"/>
<rect x="2752" y="172.5" width="10" height="2.4" fill="#c586c0" opacity=".6"/>
<rect x="2764" y="172.5" width="2" height="2.4" fill="#9cdcfe" opacity=".6"/>
<rect x="2766" y="172.5" width="2" height="2.4" fill="#d4d4d4" opacity=".6"/>
<rect x="2768" y="172.5" width="38" height="2.4" fill="#dcdcaa" opacity=".6"/>
<rect x="2806" y="172.5" width="2" height="2.4" fill="#ffd700" opacity=".6"/>
<rect x="2808" y="172.5" width="10" height="2.4" fill="#569cd6" opacity=".6"/>
<rect x="2820" y="172.5" width="10" height="2.4" fill="#4ec9b0" opacity=".6"/>
<rect x="2830" y="172.5" width="4" height="2.4" fill="#da70d6" opacity=".6"/>
<rect x="2834" y="172.5" width="2" height="2.4" fill="#ffd700" opacity=".6"/>
<rect x="2836" y="172.5" width="2" height="2.4" fill="#d4d4d4" opacity=".6"/>
<rect x="2752" y="180.5" width="10" height="2.4" fill="#c586c0" opacity=".6"/>
<rect x="2764" y="180.5" width="2" height="2.4" fill="#9cdcfe" opacity=".6"/>
<rect x="2766" y="180.5" width="2" height="2.4" fill="#ffd700" opacity=".6"/>
<rect x="2768" y="180.5" width="6" height="2.4" fill="#ce9178" opacity=".6"/>
<rect x="2776" y="180.5" width="4" height="2.4" fill="#ce9178" opacity=".6"/>
<rect x="2782" y="180.5" width="6" height="2.4" fill="#ce9178" opacity=".6"/>
<rect x="2790" y="180.5" width="10" height="2.4" fill="#ce9178" opacity=".6"/>
<rect x="2800" y="180.5" width="2" height="2.4" fill="#ffd700" opacity=".6"/>
<rect x="2802" y="180.5" width="2" height="2.4" fill="#d4d4d4" opacity=".6"/>
<rect x="2804" y="180.5" width="6" height="2.4" fill="#dcdcaa" opacity=".6"/>
<rect x="2810" y="180.5" width="4" height="2.4" fill="#ffd700" opacity=".6"/>
<rect x="2814" y="180.5" width="2" height="2.4" fill="#d4d4d4" opacity=".6"/>
<rect x="2752" y="188.5" width="10" height="2.4" fill="#c586c0" opacity=".6"/>
<rect x="2764" y="188.5" width="2" height="2.4" fill="#9cdcfe" opacity=".6"/>
<rect x="2766" y="188.5" width="2" height="2.4" fill="#ffd700" opacity=".6"/>
<rect x="2768" y="188.5" width="14" height="2.4" fill="#ce9178" opacity=".6"/>
<rect x="2782" y="188.5" width="2" height="2.4" fill="#ffd700" opacity=".6"/>
<rect x="2784" y="188.5" width="2" height="2.4" fill="#d4d4d4" opacity=".6"/>
<rect x="2786" y="188.5" width="6" height="2.4" fill="#dcdcaa" opacity=".6"/>
<rect x="2792" y="188.5" width="4" height="2.4" fill="#ffd700" opacity=".6"/>
<rect x="2796" y="188.5" width="2" height="2.4" fill="#d4d4d4" opacity=".6"/>
<rect x="2752" y="196.5" width="10" height="2.4" fill="#c586c0" opacity=".6"/>
<rect x="2764" y="196.5" width="2" height="2.4" fill="#9cdcfe" opacity=".6"/>
<rect x="2766" y="196.5" width="2" height="2.4" fill="#ffd700" opacity=".6"/>
<rect x="2768" y="196.5" width="18" height="2.4" fill="#4ec9b0" opacity=".6"/>
<rect x="2786" y="196.5" width="2" height="2.4" fill="#ffd700" opacity=".6"/>
<rect x="2788" y="196.5" width="2" height="2.4" fill="#d4d4d4" opacity=".6"/>
<rect x="2790" y="196.5" width="18" height="2.4" fill="#dcdcaa" opacity=".6"/>
<rect x="2808" y="196.5" width="2" height="2.4" fill="#ffd700" opacity=".6"/>
<rect x="2810" y="196.5" width="12" height="2.4" fill="#ce9178" opacity=".6"/>
<rect x="2822" y="196.5" width="2" height="2.4" fill="#ffd700" opacity=".6"/>
<rect x="2824" y="196.5" width="2" height="2.4" fill="#d4d4d4" opacity=".6"/>
<rect x="2752" y="204.5" width="10" height="2.4" fill="#569cd6" opacity=".6"/>
<rect x="2764" y="204.5" width="12" height="2.4" fill="#9cdcfe" opacity=".6"/>
<rect x="2778" y="204.5" width="2" height="2.4" fill="#d4d4d4" opacity=".6"/>
<rect x="2782" y="204.5" width="2" height="2.4" fill="#ffd700" opacity=".6"/>
<rect x="2784" y="204" width="2" height="3" fill="#eeff00" opacity=".8"/>
<rect x="2786" y="204.5" width="16" height="2.4" fill="#4ec9b0" opacity=".6"/>
<rect x="2802" y="204.5" width="2" height="2.4" fill="#d4d4d4" opacity=".6"/>
<rect x="2804" y="204.5" width="16" height="2.4" fill="#9cdcfe" opacity=".6"/>
<rect x="2820" y="204.5" width="2" height="2.4" fill="#d4d4d4" opacity=".6"/>
<rect x="2824" y="204" width="2" height="3" fill="#000000" opacity=".8"/>
<rect x="2826" y="204.5" width="16" height="2.4" fill="#4ec9b0" opacity=".6"/>
<rect x="2842" y="204.5" width="2" height="2.4" fill="#d4d4d4" opacity=".6"/>
<rect x="2844" y="204.5" width="14" height="2.4" fill="#9cdcfe" opacity=".6"/>
<rect x="2858" y="204.5" width="2" height="2.4" fill="#d4d4d4" opacity=".6"/>
<rect x="2862" y="204" width="2" height="3" fill="#ffffff" opacity=".8"/>
<rect x="2864" y="204.5" width="16" height="2.4" fill="#4ec9b0" opacity=".6"/>
<rect x="2880" y="204.5" width="2" height="2.4" fill="#d4d4d4" opacity=".6"/>
<rect x="2882" y="204.5" width="14" height="2.4" fill="#9cdcfe" opacity=".6"/>
<rect x="2896" y="204.5" width="2" height="2.4" fill="#ffd700" opacity=".6"/>
<rect x="2898" y="204.5" width="2" height="2.4" fill="#d4d4d4" opacity=".6"/>
<rect x="2752" y="212.5" width="6" height="2.4" fill="#c586c0" opacity=".6"/>
<rect x="2760" y="212.5" width="2" height="2.4" fill="#ffd700" opacity=".6"/>
<rect x="2762" y="212.5" width="10" height="2.4" fill="#569cd6" opacity=".6"/>
<rect x="2774" y="212.5" width="10" height="2.4" fill="#9cdcfe" opacity=".6"/>
<rect x="2786" y="212.5" width="4" height="2.4" fill="#c586c0" opacity=".6"/>
<rect x="2792" y="212.5" width="12" height="2.4" fill="#9cdcfe" opacity=".6"/>
<rect x="2804" y="212.5" width="2" height="2.4" fill="#ffd700" opacity=".6"/>
<rect x="2808" y="212.5" width="2" height="2.4" fill="#ffd700" opacity=".6"/>
<rect x="2756" y="216.5" width="10" height="2.4" fill="#c586c0" opacity=".6"/>
<rect x="2768" y="216.5" width="2" height="2.4" fill="#9cdcfe" opacity=".6"/>
<rect x="2770" y="216.5" width="2" height="2.4" fill="#da70d6" opacity=".6"/>
<rect x="2760" y="220.5" width="26" height="2.4" fill="#4ec9b0" opacity=".6"/>
<rect x="2786" y="220.5" width="2" height="2.4" fill="#d4d4d4" opacity=".6"/>
<rect x="2756" y="224.5" width="2" height="2.4" fill="#da70d6" opacity=".6"/>
<rect x="2758" y="224.5" width="2" height="2.4" fill="#d4d4d4" opacity=".6"/>
<rect x="2760" y="224.5" width="10" height="2.4" fill="#dcdcaa" opacity=".6"/>
<rect x="2770" y="224.5" width="2" height="2.4" fill="#d4d4d4" opacity=".6"/>
<rect x="2772" y="224.5" width="26" height="2.4" fill="#4ec9b0" opacity=".6"/>
<rect x="2798" y="224.5" width="2" height="2.4" fill="#d4d4d4" opacity=".6"/>
<rect x="2800" y="224.5" width="2" height="2.4" fill="#da70d6" opacity=".6"/>
<rect x="2802" y="224.5" width="2" height="2.4" fill="#179fff" opacity=".6"/>
<rect x="2804" y="224.5" width="6" height="2.4" fill="#9cdcfe" opacity=".6"/>
<rect x="2810" y="224.5" width="2" height="2.4" fill="#179fff" opacity=".6"/>
<rect x="2814" y="224.5" width="4" height="2.4" fill="#d4d4d4" opacity=".6"/>
<rect x="2820" y="224.5" width="6" height="2.4" fill="#9cdcfe" opacity=".6"/>
<rect x="2826" y="224.5" width="2" height="2.4" fill="#d4d4d4" opacity=".6"/>
<rect x="2828" y="224.5" width="10" height="2.4" fill="#9cdcfe" opacity=".6"/>
<rect x="2840" y="224.5" width="4" height="2.4" fill="#d4d4d4" opacity=".6"/>
<rect x="2846" y="224.5" width="10" height="2.4" fill="#9cdcfe" opacity=".6"/>
<rect x="2856" y="224.5" width="2" height="2.4" fill="#da70d6" opacity=".6"/>
<rect x="2858" y="224.5" width="2" height="2.4" fill="#d4d4d4" opacity=".6"/>
<rect x="2860" y="224.5" width="16" height="2.4" fill="#dcdcaa" opacity=".6"/>
<rect x="2876" y="224.5" width="4" height="2.4" fill="#da70d6" opacity=".6"/>
<rect x="2880" y="224.5" width="2" height="2.4" fill="#d4d4d4" opacity=".6"/>
<rect x="2882" y="224.5" width="6" height="2.4" fill="#dcdcaa" opacity=".6"/>
<rect x="2888" y="224.5" width="4" height="2.4" fill="#da70d6" opacity=".6"/>
<rect x="2892" y="224.5" width="2" height="2.4" fill="#d4d4d4" opacity=".6"/>
<rect x="2752" y="228.5" width="2" height="2.4" fill="#ffd700" opacity=".6"/>
<rect x="2752" y="236.5" width="10" height="2.4" fill="#c586c0" opacity=".6"/>
<rect x="2764" y="236.5" width="2" height="2.4" fill="#9cdcfe" opacity=".6"/>
<rect x="2766" y="236.5" width="2" height="2.4" fill="#ffd700" opacity=".6"/>
<rect x="2768" y="236.5" width="16" height="2.4" fill="#ce9178" opacity=".6"/>
<rect x="2784" y="236.5" width="2" height="2.4" fill="#ffd700" opacity=".6"/>
<rect x="2786" y="236.5" width="2" height="2.4" fill="#d4d4d4" opacity=".6"/>
<rect x="2788" y="236.5" width="6" height="2.4" fill="#dcdcaa" opacity=".6"/>
<rect x="2794" y="236.5" width="4" height="2.4" fill="#ffd700" opacity=".6"/>
<rect x="2798" y="236.5" width="2" height="2.4" fill="#d4d4d4" opacity=".6"/>
<rect x="2752" y="244.5" width="4" height="2.4" fill="#6a9955" opacity=".6"/>
<rect x="2758" y="244.5" width="6" height="2.4" fill="#6a9955" opacity=".6"/>
<rect x="2766" y="244.5" width="14" height="2.4" fill="#6a9955" opacity=".6"/>
<rect x="2782" y="244.5" width="4" height="2.4" fill="#6a9955" opacity=".6"/>
<rect x="2788" y="244.5" width="10" height="2.4" fill="#6a9955" opacity=".6"/>
<rect x="2752" y="248.5" width="4" height="2.4" fill="#6a9955" opacity=".6"/>
<rect x="2758" y="248.5" width="10" height="2.4" fill="#6a9955" opacity=".6"/>
<rect x="2770" y="248.5" width="98" height="2.4" fill="#6a9955" opacity=".6"/>
<rect x="2752" y="256.5" width="10" height="2.4" fill="#c586c0" opacity=".6"/>
<rect x="2764" y="256.5" width="2" height="2.4" fill="#9cdcfe" opacity=".6"/>
<rect x="2766" y="256.5" width="2" height="2.4" fill="#ffd700" opacity=".6"/>
<rect x="2756" y="260.5" width="32" height="2.4" fill="#4ec9b0" opacity=".6"/>
<rect x="2788" y="260.5" width="2" height="2.4" fill="#d4d4d4" opacity=".6"/>
<rect x="2752" y="264.5" width="2" height="2.4" fill="#ffd700" opacity=".6"/>
<rect x="2754" y="264.5" width="2" height="2.4" fill="#d4d4d4" opacity=".6"/>
<rect x="2756" y="264.5" width="10" height="2.4" fill="#dcdcaa" opacity=".6"/>
<rect x="2766" y="264.5" width="2" height="2.4" fill="#d4d4d4" opacity=".6"/>
<rect x="2768" y="264.5" width="32" height="2.4" fill="#4ec9b0" opacity=".6"/>
<rect x="2800" y="264.5" width="2" height="2.4" fill="#d4d4d4" opacity=".6"/>
<rect x="2802" y="264.5" width="2" height="2.4" fill="#ffd700" opacity=".6"/>
<rect x="2804" y="264.5" width="2" height="2.4" fill="#da70d6" opacity=".6"/>
<rect x="2806" y="264.5" width="12" height="2.4" fill="#9cdcfe" opacity=".6"/>
<rect x="2818" y="264.5" width="2" height="2.4" fill="#da70d6" opacity=".6"/>
<rect x="2822" y="264.5" width="4" height="2.4" fill="#d4d4d4" opacity=".6"/>
<rect x="2828" y="264.5" width="12" height="2.4" fill="#9cdcfe" opacity=".6"/>
<rect x="2840" y="264.5" width="2" height="2.4" fill="#d4d4d4" opacity=".6"/>
<rect x="2842" y="264.5" width="14" height="2.4" fill="#9cdcfe" opacity=".6"/>
<rect x="2858" y="264.5" width="4" height="2.4" fill="#d4d4d4" opacity=".6"/>
<rect x="2864" y="264.5" width="22" height="2.4" fill="#ce9178" opacity=".6"/>
<rect x="2886" y="264.5" width="2" height="2.4" fill="#ffd700" opacity=".6"/>
<rect x="2888" y="264.5" width="2" height="2.4" fill="#d4d4d4" opacity=".6"/>
<rect x="2890" y="264.5" width="6" height="2.4" fill="#dcdcaa" opacity=".6"/>
<rect x="2896" y="264.5" width="4" height="2.4" fill="#ffd700" opacity=".6"/>
<rect x="2900" y="264.5" width="2" height="2.4" fill="#d4d4d4" opacity=".6"/>
<rect x="2752" y="272.5" width="10" height="2.4" fill="#c586c0" opacity=".6"/>
<rect x="2764" y="272.5" width="2" height="2.4" fill="#9cdcfe" opacity=".6"/>
<rect x="2766" y="272.5" width="2" height="2.4" fill="#ffd700" opacity=".6"/>
<rect x="2768" y="272.5" width="16" height="2.4" fill="#4ec9b0" opacity=".6"/>
<rect x="2784" y="272.5" width="2" height="2.4" fill="#ffd700" opacity=".6"/>
<rect x="2786" y="272.5" width="2" height="2.4" fill="#d4d4d4" opacity=".6"/>
<rect x="2788" y="272.5" width="20" height="2.4" fill="#dcdcaa" opacity=".6"/>
<rect x="2808" y="272.5" width="2" height="2.4" fill="#ffd700" opacity=".6"/>
<rect x="2810" y="272.5" width="2" height="2.4" fill="#9cdcfe" opacity=".6"/>
<rect x="2812" y="272.5" width="2" height="2.4" fill="#da70d6" opacity=".6"/>
<rect x="2814" y="272.5" width="10" height="2.4" fill="#4ec9b0" opacity=".6"/>
<rect x="2824" y="272.5" width="2" height="2.4" fill="#d4d4d4" opacity=".6"/>
<rect x="2826" y="272.5" width="24" height="2.4" fill="#9cdcfe" opacity=".6"/>
<rect x="2850" y="272.5" width="2" height="2.4" fill="#da70d6" opacity=".6"/>
<rect x="2852" y="272.5" width="2" height="2.4" fill="#ffd700" opacity=".6"/>
<rect x="2854" y="272.5" width="2" height="2.4" fill="#d4d4d4" opacity=".6"/>
<rect x="2856" y="272.5" width="2" height="2.4" fill="#9cdcfe" opacity=".6"/>
<rect x="2858" y="272.5" width="2" height="2.4" fill="#ffd700" opacity=".6"/>
<rect x="2860" y="272.5" width="14" height="2.4" fill="#ce9178" opacity=".6"/>
<rect x="2874" y="272.5" width="2" height="2.4" fill="#ffd700" opacity=".6"/>
<rect x="2876" y="272.5" width="2" height="2.4" fill="#d4d4d4" opacity=".6"/>
<rect x="2878" y="272.5" width="6" height="2.4" fill="#dcdcaa" opacity=".6"/>
<rect x="2884" y="272.5" width="4" height="2.4" fill="#ffd700" opacity=".6"/>
<rect x="2888" y="272.5" width="2" height="2.4" fill="#d4d4d4" opacity=".6"/>
<rect x="2752" y="280.5" width="4" height="2.4" fill="#6a9955" opacity=".6"/>
<rect x="2758" y="280.5" width="6" height="2.4" fill="#6a9955" opacity=".6"/>
<rect x="2766" y="280.5" width="10" height="2.4" fill="#6a9955" opacity=".6"/>
<rect x="2778" y="280.5" width="4" height="2.4" fill="#6a9955" opacity=".6"/>
<rect x="2784" y="280.5" width="10" height="2.4" fill="#6a9955" opacity=".6"/>
<rect x="2796" y="280.5" width="8" height="2.4" fill="#6a9955" opacity=".6"/>
<rect x="2806" y="280.5" width="4" height="2.4" fill="#6a9955" opacity=".6"/>
<rect x="2812" y="280.5" width="16" height="2.4" fill="#6a9955" opacity=".6"/>
<rect x="2830" y="280.5" width="6" height="2.4" fill="#6a9955" opacity=".6"/>
<rect x="2838" y="280.5" width="8" height="2.4" fill="#6a9955" opacity=".6"/>
<rect x="2848" y="280.5" width="4" height="2.4" fill="#6a9955" opacity=".6"/>
<rect x="2854" y="280.5" width="4" height="2.4" fill="#6a9955" opacity=".6"/>
<rect x="2860" y="280.5" width="10" height="2.4" fill="#6a9955" opacity=".6"/>
<rect x="2872" y="280.5" width="8" height="2.4" fill="#6a9955" opacity=".6"/>
<rect x="2882" y="280.5" width="14" height="2.4" fill="#6a9955" opacity=".6"/>
<rect x="2898" y="280.5" width="6" height="2.4" fill="#6a9955" opacity=".6"/>
<rect x="2906" y="280.5" width="2" height="2.4" fill="#6a9955" opacity=".6"/>
<rect x="2752" y="284.5" width="4" height="2.4" fill="#6a9955" opacity=".6"/>
<rect x="2758" y="284.5" width="4" height="2.4" fill="#6a9955" opacity=".6"/>
<rect x="2764" y="284.5" width="38" height="2.4" fill="#6a9955" opacity=".6"/>
<rect x="2804" y="284.5" width="2" height="2.4" fill="#6a9955" opacity=".6"/>
<rect x="2752" y="288.5" width="4" height="2.4" fill="#6a9955" opacity=".6"/>
<rect x="2762" y="288.5" width="10" height="2.4" fill="#6a9955" opacity=".6"/>
<rect x="2774" y="288.5" width="34" height="2.4" fill="#6a9955" opacity=".6"/>
<rect x="2752" y="292.5" width="4" height="2.4" fill="#6a9955" opacity=".6"/>
<rect x="2770" y="292.5" width="46" height="2.4" fill="#6a9955" opacity=".6"/>
<rect x="2752" y="296.5" width="4" height="2.4" fill="#6a9955" opacity=".6"/>
<rect x="2774" y="296.5" width="16" height="2.4" fill="#6a9955" opacity=".6"/>
<rect x="2792" y="296.5" width="4" height="2.4" fill="#6a9955" opacity=".6"/>
<rect x="2798" y="296.5" width="30" height="2.4" fill="#6a9955" opacity=".6"/>
<rect x="2752" y="300.5" width="4" height="2.4" fill="#6a9955" opacity=".6"/>
<rect x="2770" y="300.5" width="2" height="2.4" fill="#6a9955" opacity=".6"/>
<rect x="2752" y="304.5" width="4" height="2.4" fill="#6a9955" opacity=".6"/>
<rect x="2770" y="304.5" width="12" height="2.4" fill="#6a9955" opacity=".6"/>
<rect x="2752" y="308.5" width="4" height="2.4" fill="#6a9955" opacity=".6"/>
<rect x="2770" y="308.5" width="22" height="2.4" fill="#6a9955" opacity=".6"/>
<rect x="2752" y="312.5" width="4" height="2.4" fill="#6a9955" opacity=".6"/>
<rect x="2770" y="312.5" width="14" height="2.4" fill="#6a9955" opacity=".6"/>
<rect x="2752" y="320.5" width="4" height="2.4" fill="#6a9955" opacity=".6"/>
<rect x="2762" y="320.5" width="4" height="2.4" fill="#6a9955" opacity=".6"/>
<rect x="2768" y="320.5" width="12" height="2.4" fill="#6a9955" opacity=".6"/>
<rect x="2782" y="320.5" width="74" height="2.4" fill="#6a9955" opacity=".6"/>
<rect x="2858" y="320.5" width="2" height="2.4" fill="#6a9955" opacity=".6"/>
<rect x="2752" y="324.5" width="4" height="2.4" fill="#6a9955" opacity=".6"/>
<rect x="2766" y="324.5" width="10" height="2.4" fill="#6a9955" opacity=".6"/>
<rect x="2778" y="324.5" width="72" height="2.4" fill="#6a9955" opacity=".6"/>
<rect x="2752" y="328.5" width="4" height="2.4" fill="#6a9955" opacity=".6"/>
<rect x="2762" y="328.5" width="2" height="2.4" fill="#6a9955" opacity=".6"/>
<rect x="2752" y="336.5" width="4" height="2.4" fill="#6a9955" opacity=".6"/>
<rect x="2762" y="336.5" width="10" height="2.4" fill="#6a9955" opacity=".6"/>
<rect x="2774" y="336.5" width="42" height="2.4" fill="#6a9955" opacity=".6"/>
<rect x="2752" y="340.5" width="4" height="2.4" fill="#6a9955" opacity=".6"/>
<rect x="2762" y="340.5" width="10" height="2.4" fill="#6a9955" opacity=".6"/>
<rect x="2774" y="340.5" width="58" height="2.4" fill="#6a9955" opacity=".6"/>
<rect x="2752" y="348.5" width="4" height="2.4" fill="#6a9955" opacity=".6"/>
<rect x="2762" y="348.5" width="4" height="2.4" fill="#6a9955" opacity=".6"/>
<rect x="2768" y="348.5" width="8" height="2.4" fill="#6a9955" opacity=".6"/>
<rect x="2778" y="348.5" width="6" height="2.4" fill="#6a9955" opacity=".6"/>
<rect x="2786" y="348.5" width="24" height="2.4" fill="#6a9955" opacity=".6"/>
<rect x="2812" y="348.5" width="4" height="2.4" fill="#6a9955" opacity=".6"/>
<rect x="2818" y="348.5" width="8" height="2.4" fill="#6a9955" opacity=".6"/>
<rect x="2828" y="348.5" width="4" height="2.4" fill="#6a9955" opacity=".6"/>
<rect x="2752" y="352.5" width="4" height="2.4" fill="#6a9955" opacity=".6"/>
<rect x="2762" y="352.5" width="10" height="2.4" fill="#6a9955" opacity=".6"/>
<rect x="2774" y="352.5" width="52" height="2.4" fill="#6a9955" opacity=".6"/>
<rect x="2828" y="352.5" width="34" height="2.4" fill="#6a9955" opacity=".6"/>
<rect x="2864" y="352.5" width="8" height="2.4" fill="#6a9955" opacity=".6"/>
<rect x="2752" y="360.5" width="4" height="2.4" fill="#6a9955" opacity=".6"/>
<rect x="2762" y="360.5" width="10" height="2.4" fill="#6a9955" opacity=".6"/>
<rect x="2774" y="360.5" width="58" height="2.4" fill="#6a9955" opacity=".6"/>
<rect x="2752" y="368.5" width="4" height="2.4" fill="#6a9955" opacity=".6"/>
<rect x="2762" y="368.5" width="10" height="2.4" fill="#6a9955" opacity=".6"/>
<rect x="2774" y="368.5" width="74" height="2.4" fill="#6a9955" opacity=".6"/>
<rect x="2752" y="376.5" width="4" height="2.4" fill="#6a9955" opacity=".6"/>
<rect x="2762" y="376.5" width="10" height="2.4" fill="#6a9955" opacity=".6"/>
<rect x="2774" y="376.5" width="50" height="2.4" fill="#6a9955" opacity=".6"/>
<rect x="2752" y="384.5" width="4" height="2.4" fill="#6a9955" opacity=".6"/>
<rect x="2762" y="384.5" width="58" height="2.4" fill="#6a9955" opacity=".6"/>
<rect x="2822" y="384.5" width="32" height="2.4" fill="#6a9955" opacity=".6"/>
<rect x="2752" y="388.5" width="4" height="2.4" fill="#6a9955" opacity=".6"/>
<rect x="2758" y="388.5" width="2" height="2.4" fill="#6a9955" opacity=".6"/>
<rect x="2748" y="392.5" width="2" height="2.4" fill="#179fff" opacity=".6"/>
<rect x="2750" y="392.5" width="2" height="2.4" fill="#da70d6" opacity=".6"/>
<rect x="2752" y="392.5" width="2" height="2.4" fill="#d4d4d4" opacity=".6"/>
<rect x="2744" y="396.5" width="2" height="2.4" fill="#ffd700" opacity=".6"/>
<rect x="2739" y="128" width="2" height="4" fill="#f14c4c"/><rect x="2739" y="144" width="2" height="4" fill="#f14c4c"/>
</svg>
<div class="r" style="left:2909px;top:128px;width:2px;height:1010px;background:#2b2b2b;"></div>
<div class="r" style="left:2911px;top:135px;width:9px;height:12px;background:#b8392f;"></div>
<div class="r" style="left:2911px;top:176px;width:9px;height:12px;background:#b8392f;"></div>
<div class="r" style="left:2911px;top:267px;width:25px;height:4px;background:#9a9a9a;"></div>
<div class="r" style="left:1514.5px;top:84.5px;width:595px;height:55px;border-radius:9px;background:#181818;border:2px solid #2b2b2b;box-shadow:0 0 12px rgba(0,0,0,.45)"></div>
<svg class="i" style="left:1529.6px;top:95.5px" width="32" height="32" viewBox="-16.0 -16.0 32 32" fill="none" stroke="#cccccc" stroke-width="2.2" stroke-linejoin="round" stroke-linecap="round"><rect x="-6" y="-9.5" width="3.2" height="3.2" fill="#8a8a8a" stroke="none"/><rect x="-6" y="-1.6" width="3.2" height="3.2" fill="#8a8a8a" stroke="none"/><rect x="-6" y="6.3" width="3.2" height="3.2" fill="#8a8a8a" stroke="none"/><rect x="2.6" y="-9.5" width="3.2" height="3.2" fill="#8a8a8a" stroke="none"/><rect x="2.6" y="-1.6" width="3.2" height="3.2" fill="#8a8a8a" stroke="none"/><rect x="2.6" y="6.3" width="3.2" height="3.2" fill="#8a8a8a" stroke="none"/></svg>
<svg class="i" style="left:1568.0px;top:95.5px" width="32" height="32" viewBox="-16.0 -16.0 32 32" fill="none" stroke="#75beff" stroke-width="2.4" stroke-linejoin="round" stroke-linecap="round"><path d="M-5.5 -10 V10 M5.5 -10 V10"/></svg>
<svg class="i" style="left:1620.0px;top:95.5px" width="32" height="32" viewBox="-16.0 -16.0 32 32" fill="none" stroke="#6e6e6e" stroke-width="2.3" stroke-linejoin="round" stroke-linecap="round"><path d="M-11 -1 A11 11 0 0 1 10.5 -3.5 M11 -11 V-3 H3"/><circle cx="0" cy="8" r="3.4" fill="#6e6e6e" stroke="none"/></svg>
<svg class="i" style="left:1672.0px;top:95.5px" width="32" height="32" viewBox="-16.0 -16.0 32 32" fill="none" stroke="#6e6e6e" stroke-width="2.3" stroke-linejoin="round" stroke-linecap="round"><path d="M0 -12 V2 M-6.5 -4.5 L0 2 L6.5 -4.5"/><circle cx="0" cy="9" r="3.4" fill="#6e6e6e" stroke="none"/></svg>
<svg class="i" style="left:1724.0px;top:95.5px" width="32" height="32" viewBox="-16.0 -16.0 32 32" fill="none" stroke="#6e6e6e" stroke-width="2.3" stroke-linejoin="round" stroke-linecap="round"><path d="M0 2 V-12 M-6.5 -5.5 L0 -12 L6.5 -5.5"/><circle cx="0" cy="9" r="3.4" fill="#6e6e6e" stroke="none"/></svg>
<svg class="i" style="left:1774.0px;top:95.5px" width="32" height="32" viewBox="-16.0 -16.0 32 32" fill="none" stroke="#cccccc" stroke-width="2.2" stroke-linejoin="round" stroke-linecap="round"><path d="M2.5 -14 L-8 2 H-1.5 L-3 14 L8 -3 H1.5 Z" fill="#e8a92e" stroke="none"/></svg>
<svg class="i" style="left:1827.5px;top:95.5px" width="32" height="32" viewBox="-16.0 -16.0 32 32" fill="none" stroke="#89d185" stroke-width="2.4" stroke-linejoin="round" stroke-linecap="round"><path d="M-9.5 -6.5 A11.5 11.5 0 1 1 -11.3 2.5 M-11 -12 V-5.5 H-4.5"/></svg>
<svg class="i" style="left:1879.0px;top:95.5px" width="32" height="32" viewBox="-16.0 -16.0 32 32" fill="none" stroke="#f48771" stroke-width="2.1" stroke-linejoin="round" stroke-linecap="round"><g transform="rotate(-38)"><path d="M-15 0 H-9.5 M-3.2 -5.6 H-4 a5.6 5.6 0 0 0 0 11.2 H-3.2 Z M-3.2 -2.6 H1.2 M-3.2 2.6 H1.2 M1.2 -5.6 H4 a5.6 5.6 0 0 1 0 11.2 H1.2 Z M9.5 0 H15"/></g></svg>
<div class="r" style="left:1935px;top:97px;width:1.5px;height:30px;background:#5a5a5a;"></div>
<svg class="i" style="left:1957.0px;top:95.5px" width="32" height="32" viewBox="-16.0 -16.0 32 32" fill="none" stroke="#cccccc" stroke-width="2.3" stroke-linejoin="round" stroke-linecap="round"><path d="M5.5 -10 A11.5 11.5 0 1 1 -5.5 -10 M-0.5 -14.5 L5.5 -10.5 L1 -5"/></svg>
<svg class="i" style="left:2010.0px;top:95.5px" width="32" height="32" viewBox="-16.0 -16.0 32 32" fill="none" stroke="#f48771" stroke-width="2.4" stroke-linejoin="round" stroke-linecap="round"><rect x="-11" y="-11" width="22" height="22" rx="2"/></svg>
<svg class="i" style="left:2061.6px;top:95.5px" width="32" height="32" viewBox="-16.0 -16.0 32 32" fill="none" stroke="#cccccc" stroke-width="2" stroke-linejoin="round" stroke-linecap="round"><g stroke-linecap="round"><path d="M-10.5 10.5 L1.5 -1.5" stroke="#cccccc" stroke-width="6.4"/><path d="M-10.5 10.5 L1.5 -1.5" stroke="#181818" stroke-width="2.4"/><path d="M11.28 -6.08 A4.8 4.8 0 1 1 6.08 -11.28" stroke="#cccccc" stroke-width="6" stroke-linecap="butt"/><path d="M11.25 -7.17 A4.8 4.8 0 1 1 7.17 -11.25" stroke="#181818" stroke-width="2" stroke-linecap="butt"/><path d="M3.5 3.5 L10.5 10.5" stroke="#cccccc" stroke-width="6.4"/><path d="M3.5 3.5 L10.5 10.5" stroke="#181818" stroke-width="2.4"/><path d="M-7 -7 L0.5 0.5" stroke="#cccccc" stroke-width="2.2"/><path d="M-12 -12.5 L-8 -11 L-6 -6.5 L-10.5 -8 Z" stroke="#cccccc" stroke-width="1.8" fill="#181818"/></g></svg>
<div class="r" style="left:1466px;top:1139px;width:1470px;height:454px;background:#181818;"></div>
<div class="r" style="left:1466px;top:1138px;width:1470px;height:2px;background:#2b2b2b;"></div>
<div class="t" style="top:1163.38px;font-size:22px;color:#9d9d9d;letter-spacing:-0.608px;left:1506.50px;">PROBLEMS</div>
<div class="r" style="left:1634px;top:1158px;width:42px;height:32px;border-radius:16px;background:#0078d4"></div>
<div class="t" style="top:1162.88px;font-size:22px;color:#ffffff;letter-spacing:-0.500px;left:1055.00px;width:1200px;text-align:center;">13</div>
<div class="t" style="top:1163.38px;font-size:22px;color:#9d9d9d;letter-spacing:0.012px;left:1720.50px;">OUTPUT</div>
<div class="t" style="top:1163.38px;font-size:22px;color:#9d9d9d;letter-spacing:-0.286px;left:1860.70px;">DEBUG CONSOLE</div>
<div class="t" style="top:1163.38px;font-size:22px;color:#9d9d9d;letter-spacing:-0.177px;left:2098.00px;">TERMINAL</div>
<div class="t" style="top:1163.38px;font-size:22px;color:#e7e7e7;letter-spacing:-0.416px;left:2257.80px;">TEST RESULTS</div>
<div class="r" style="left:2253px;top:1195px;width:167px;height:2px;background:#0078d4;"></div>
<div class="t" style="top:1163.38px;font-size:22px;color:#9d9d9d;letter-spacing:-0.597px;left:2464.00px;">PORTS</div>
<div class="t" style="top:1163.38px;font-size:22px;color:#9d9d9d;letter-spacing:-0.356px;left:2586.50px;">GITLENS</div>
<svg class="i" style="left:2746.0px;top:1158.0px" width="32" height="32" viewBox="-16.0 -16.0 32 32" fill="none" stroke="#cccccc" stroke-width="2" stroke-linejoin="round" stroke-linecap="round"><path d="M-13 -9 H13 M-13 -3 H13 M-13 3 H3 M-13 9 H3 M7 4 L13 10 M13 4 L7 10"/></svg>
<div class="r" style="left:2800.5px;top:1158px;width:1.5px;height:32px;background:#5a5a5a;"></div>
<svg class="i" style="left:2824.0px;top:1158.0px" width="32" height="32" viewBox="-16.0 -16.0 32 32" fill="none" stroke="#cccccc" stroke-width="2.2" stroke-linejoin="round" stroke-linecap="round"><path d="M-11 -4 V-11 H-4 M4 -11 H11 V-4 M11 4 V11 H4 M-4 11 H-11 V4"/></svg>
<svg class="i" style="left:2876.0px;top:1158.0px" width="32" height="32" viewBox="-16.0 -16.0 32 32" fill="none" stroke="#cccccc" stroke-width="2.2" stroke-linejoin="round" stroke-linecap="round"><path d="M-8 -8 L8 8 M8 -8 L-8 8"/></svg>
<svg class="i" style="left:1622.184px;top:1209.5px" width="24" height="23.4" viewBox="0 0 25 25" preserveAspectRatio="none"><rect x="0.5" y="0.5" width="24" height="24" rx="5" fill="#1fc231"/><rect x="0.5" y="0.5" width="24" height="12" rx="5" fill="#35d34a" opacity=".6"/><path d="M5.5 13 L10.5 19 L19.5 5.5" stroke="#fff" stroke-width="3.6" fill="none" stroke-linecap="round" stroke-linejoin="round"/></svg>
<div class="t" style="top:1210.30px;font-size:24px;color:#cccccc;font-family:'DejaVu Sans Mono','Liberation Mono',monospace;left:1679.88px;">10. tap widgets with text "Ready!".</div>
<svg class="i" style="left:1625.584px;top:1237.1px" width="17.5" height="24.4" viewBox="0 0 20 26" preserveAspectRatio="none"><rect x="1.5" y="0.5" width="17" height="3.6" rx="1.2" fill="#7a4a35"/><rect x="1.5" y="21.9" width="17" height="3.6" rx="1.2" fill="#7a4a35"/><path d="M3.5 4 H16.5 C16.5 9 12 11 12 13 C12 15 16.5 17 16.5 22 H3.5 C3.5 17 8 15 8 13 C8 11 3.5 9 3.5 4 Z" fill="#e9e6e0"/><path d="M5.5 6.5 H14.5 C14 9 11 10.5 10 12 C9 10.5 6 9 5.5 6.5 Z M5 22 C5.5 19 8.5 17.5 10 16.5 C11.5 17.5 14.5 19 15 22 Z" fill="#d9b49a"/></svg>
<div class="t" style="top:1238.30px;font-size:24px;color:#cccccc;font-family:'DejaVu Sans Mono','Liberation Mono',monospace;left:1679.88px;">11. tap widgets with widget matching predicate desc</div>
<svg class="i" style="left:1622.184px;top:1265.5px" width="24" height="23.4" viewBox="0 0 25 25" preserveAspectRatio="none"><rect x="0.5" y="0.5" width="24" height="24" rx="5" fill="#1fc231"/><rect x="0.5" y="0.5" width="24" height="12" rx="5" fill="#35d34a" opacity=".6"/><path d="M5.5 13 L10.5 19 L19.5 5.5" stroke="#fff" stroke-width="3.6" fill="none" stroke-linecap="round" stroke-linejoin="round"/></svg>
<div class="t" style="top:1266.30px;font-size:24px;color:#cccccc;font-family:'DejaVu Sans Mono','Liberation Mono',monospace;left:1679.88px;">11. tap widgets with widget matching predicate desc</div>
<div class="t" style="top:1294.30px;font-size:24px;color:#cccccc;font-family:'DejaVu Sans Mono','Liberation Mono',monospace;left:1506.50px;">ending from widgets with type "PTElevatedButton" inclusive.</div>
<svg class="i" style="left:1625.584px;top:1321.1px" width="17.5" height="24.4" viewBox="0 0 20 26" preserveAspectRatio="none"><rect x="1.5" y="0.5" width="17" height="3.6" rx="1.2" fill="#7a4a35"/><rect x="1.5" y="21.9" width="17" height="3.6" rx="1.2" fill="#7a4a35"/><path d="M3.5 4 H16.5 C16.5 9 12 11 12 13 C12 15 16.5 17 16.5 22 H3.5 C3.5 17 8 15 8 13 C8 11 3.5 9 3.5 4 Z" fill="#e9e6e0"/><path d="M5.5 6.5 H14.5 C14 9 11 10.5 10 12 C9 10.5 6 9 5.5 6.5 Z M5 22 C5.5 19 8.5 17.5 10 16.5 C11.5 17.5 14.5 19 15 22 Z" fill="#d9b49a"/></svg>
<div class="t" style="top:1322.30px;font-size:24px;color:#cccccc;font-family:'DejaVu Sans Mono','Liberation Mono',monospace;left:1679.88px;">12. tap widgets with text "click" descending from w</div>
<div class="t" style="top:1350.30px;font-size:24px;color:#cccccc;font-family:'DejaVu Sans Mono','Liberation Mono',monospace;left:1506.50px;">idgets with type "ListTile" that are ancestors of widgets with </div>
<svg class="i" style="left:1622.184px;top:1377.5px" width="24" height="23.4" viewBox="0 0 25 25" preserveAspectRatio="none"><rect x="0.5" y="0.5" width="24" height="24" rx="5" fill="#1fc231"/><rect x="0.5" y="0.5" width="24" height="12" rx="5" fill="#35d34a" opacity=".6"/><path d="M5.5 13 L10.5 19 L19.5 5.5" stroke="#fff" stroke-width="3.6" fill="none" stroke-linecap="round" stroke-linejoin="round"/></svg>
<div class="t" style="top:1378.30px;font-size:24px;color:#cccccc;font-family:'DejaVu Sans Mono','Liberation Mono',monospace;left:1679.88px;">12. tap widgets with text "click" descending from w</div>
<div class="t" style="top:1406.30px;font-size:24px;color:#cccccc;font-family:'DejaVu Sans Mono','Liberation Mono',monospace;left:1506.50px;">idgets with type "ListTile" that are ancestors of widgets with </div>
<div class="t" style="top:1434.30px;font-size:24px;color:#cccccc;font-family:'DejaVu Sans Mono','Liberation Mono',monospace;left:1506.50px;">icon "IconData(U+0E2A0)".</div>
<svg class="i" style="left:1622.284px;top:1460.9px" width="22.5" height="25" viewBox="0 0 24 26" preserveAspectRatio="none"><rect x="1" y="1" width="19" height="23" rx="1.5" fill="#ecebe8"/><path d="M4 5.5 H16 M4 9 H16 M4 12.5 H13 M4 16 H10" stroke="#9a9a9a" stroke-width="1.2"/><path d="M9 22.5 L11 17 L20.5 7 L23.5 10 L14 20 Z" fill="#f2b632"/><path d="M9 22.5 L11 17 L14 20 Z" fill="#e8c9a0"/><path d="M20.5 7 L22 5.5 L25 8.5 L23.5 10 Z" fill="#e06a7a"/></svg>
<div class="t" style="top:1462.30px;font-size:24px;color:#cccccc;font-family:'DejaVu Sans Mono','Liberation Mono',monospace;left:1679.88px;"> All tests were executed. Press "r" to start again </div>
<div class="t" style="top:1490.30px;font-size:24px;color:#cccccc;font-family:'DejaVu Sans Mono','Liberation Mono',monospace;left:1506.50px;">or "q" to quit</div>
<div class="t" style="top:1518.30px;font-size:24px;color:#cccccc;font-family:'DejaVu Sans Mono','Liberation Mono',monospace;left:1622.08px;">: &gt; Task :app:connectedDevDebugAndroidTest</div>
<div class="r" style="left:2421px;top:1208px;width:27px;height:363px;background:#111111;"></div>
<div class="r" style="left:2421px;top:1208px;width:1px;height:363px;background:#000;"></div>
<div class="r" style="left:2447px;top:1208px;width:2px;height:386px;background:#2b2b2b;"></div>
<div class="r" style="left:2449px;top:1208px;width:487px;height:44px;background:#37373d;"></div>
<svg class="i" style="left:2510px;top:1216px" width="32" height="32" viewBox="-16 -16 32 32" fill="none" stroke="#cccccc" stroke-width="2.2" stroke-linecap="round"><path d="M-9.19 -7.71 A12 12 0 0 1 11.95 1.05"/></svg>
<div class="t" style="top:1217.49px;font-size:26px;color:#cccccc;letter-spacing:0.994px;left:2550.40px;">patrol-vscode</div>
<div class="r" style="left:2482px;top:1252px;width:2px;height:44px;background:#585858;"></div>
<svg class="i" style="left:2525px;top:1255px" width="32" height="32" viewBox="-16 -16 32 32" fill="none" stroke="#cccccc" stroke-width="2.2" stroke-linecap="round"><path d="M12.80 2.26 A13 13 0 0 1 -12.22 4.45"/></svg>
<div class="t" style="top:1261.99px;font-size:26px;color:#cccccc;letter-spacing:0.461px;left:2567.00px;">main flow</div>
<div class="t" style="top:1264.19px;font-size:23.4px;color:#8c8c8c;letter-spacing:0.740px;left:2693.60px;">integration_test/mai...</div>
<svg class="i" style="left:2472px;top:1303.5px" width="32" height="32" viewBox="-16 -16 32 32" fill="none" stroke="#c5c5c5" stroke-width="2.3" stroke-linejoin="miter"><path d="M-4.7 -9.5 L4.8 0 L-4.7 9.5"/></svg>
<div class="t" style="top:1305.99px;font-size:26px;color:#cccccc;letter-spacing:0.586px;left:2516.70px;">7 older results</div>
<div class="r" style="left:738px;top:1592px;width:2198px;height:2px;background:#2b2b2b"></div>
<div class="r" style="left:738px;top:1594px;width:2198px;height:42px;background:#0078d4;border-radius:0 0 19px 19px;overflow:hidden"><div class="r" style="left:0;top:40px;width:2198px;height:2px;background:#4a96dd"></div></div>
<svg class="i" style="left:754.0px;top:1598.0px" width="32" height="32" viewBox="-16.0 -16.0 32 32" fill="none" stroke="#ffffff" stroke-width="1.8" stroke-linejoin="round" stroke-linecap="round"><path d="M-8.3 -4.6 L-0.5 3.2 L-8.3 11 M8 -10.8 L1 -3.8 L8 3.2"/></svg>
<svg class="i" style="left:817.6px;top:1598.2px" width="32" height="32" viewBox="-16.0 -16.0 32 32" fill="none" stroke="#ffffff" stroke-width="1.8" stroke-linejoin="round" stroke-linecap="round"><circle cx="-5" cy="-9.5" r="3.2"/><circle cx="-5" cy="9.5" r="3.2"/><circle cx="6" cy="-4" r="3.2"/><path d="M-5 -6.3 V6.3 M6 -0.8 C6 4 0 3 -5 5"/></svg>
<div class="t" style="top:1602.68px;font-size:24px;color:#ffffff;letter-spacing:0.285px;left:855.70px;">main*</div>
<svg class="i" style="left:930.6px;top:1598.5px" width="32" height="32" viewBox="-16.0 -16.0 32 32" fill="none" stroke="#ffffff" stroke-width="1.9" stroke-linejoin="round" stroke-linecap="round"><path d="M-9.4 -1.2 A9.5 9.5 0 0 1 8.2 -4.8 M9.6 -10 V-4.2 H3.8 M9.4 1.2 A9.5 9.5 0 0 1 -8.2 4.8 M-9.6 10 V4.2 H-3.8"/></svg>
<svg class="i" style="left:988.7px;top:1598.2px" width="32" height="32" viewBox="-16.0 -16.0 32 32" fill="none" stroke="#ffffff" stroke-width="1.8" stroke-linejoin="round" stroke-linecap="round"><circle cx="-6" cy="-9" r="3.2"/><circle cx="-6" cy="9" r="3.2"/><circle cx="7.5" cy="2" r="2.6"/><path d="M-6 -5.8 V5.8 M1.5 -13 V13 M7.5 4.6 C7.5 9 4 9.5 1.5 9.5"/></svg>
<svg class="i" style="left:1049.0px;top:1598.2px" width="32" height="32" viewBox="-16.0 -16.0 32 32" fill="none" stroke="#ffffff" stroke-width="1.8" stroke-linejoin="round" stroke-linecap="round"><path d="M12 -12 C4 -12 -3 -7 -6 1 L-1 6 C7 3 12 -4 12 -12 Z M-6 1 H-11.5 L-8 -4 H-3.5 M-1 6 V11.5 L4 8 V3.5 M-11.5 7.5 V11.5 H-7.5"/><circle cx="4.5" cy="-4.5" r="2" fill="#fff"/></svg>
<svg class="i" style="left:1077.0px;top:1598.2px" width="32" height="32" viewBox="-16.0 -16.0 32 32" fill="none" stroke="#ffffff" stroke-width="2.1" stroke-linejoin="round" stroke-linecap="round"><g transform="rotate(-40) scale(.82)"><path d="M-15 0 H-9.5 M-3.2 -5.6 H-4 a5.6 5.6 0 0 0 0 11.2 H-3.2 Z M-3.2 -2.6 H1.2 M-3.2 2.6 H1.2 M1.2 -5.6 H4 a5.6 5.6 0 0 1 0 11.2 H1.2 Z M9.5 0 H15"/></g></svg>
<div class="t" style="top:1602.68px;font-size:24px;color:#ffffff;letter-spacing:0.402px;left:1116.00px;">Launchpad</div>
<svg class="i" style="left:1269.6px;top:1598.2px" width="32" height="32" viewBox="-16.0 -16.0 32 32" fill="none" stroke="#ffffff" stroke-width="1.9" stroke-linejoin="round" stroke-linecap="round"><circle r="11.5"/><path d="M-4.5 -4.5 L4.5 4.5 M4.5 -4.5 L-4.5 4.5"/></svg>
<div class="t" style="top:1602.68px;font-size:24px;color:#ffffff;left:1307.50px;">0</div>
<svg class="i" style="left:1326.6px;top:1598.2px" width="32" height="32" viewBox="-16.0 -16.0 32 32" fill="none" stroke="#ffffff" stroke-width="1.9" stroke-linejoin="round" stroke-linecap="round"><path d="M0 -11 L12 10.5 H-12 Z M0 -3.5 V3.5"/><circle cx="0" cy="7" r="0.8" fill="#fff"/></svg>
<div class="t" style="top:1602.68px;font-size:24px;color:#ffffff;letter-spacing:0.305px;left:1365.50px;">10</div>
<svg class="i" style="left:1398.0px;top:1598.2px" width="32" height="32" viewBox="-16.0 -16.0 32 32" fill="none" stroke="#ffffff" stroke-width="1.9" stroke-linejoin="round" stroke-linecap="round"><circle r="11.5"/><path d="M0 -1 V6"/><circle cx="0" cy="-5.5" r="0.9" fill="#fff"/></svg>
<div class="t" style="top:1602.68px;font-size:24px;color:#ffffff;left:1436.00px;">3</div>
<div class="t" style="top:1602.68px;font-size:24px;color:#ffffff;letter-spacing:0.521px;left:1483.00px;">Debug my code + packages + SDK</div>
<div class="t" style="top:1602.68px;font-size:24px;color:#ffffff;letter-spacing:0.283px;left:1960.40px;">Spaces: 2</div>
<div class="t" style="top:1602.68px;font-size:24px;color:#ffffff;letter-spacing:0.752px;left:2104.00px;">UTF-8</div>
<div class="t" style="top:1602.68px;font-size:24px;color:#ffffff;letter-spacing:6.500px;left:2211.00px;-webkit-text-stroke:0;">{}</div>
<div class="t" style="top:1602.68px;font-size:24px;color:#ffffff;letter-spacing:0.720px;left:2249.60px;">Dart</div>
<svg class="i" style="left:2327.5px;top:1598.2px" width="32" height="32" viewBox="-16.0 -16.0 32 32" fill="none" stroke="#ffffff" stroke-width="2" stroke-linejoin="round" stroke-linecap="round"><path d="M-12.5 4 C-12.5 -1 -10 -3 -10 -3 C-11 -9 -6 -11 -2.5 -9.5 L0 -8 L2.5 -9.5 C6 -11 11 -9 10 -3 C10 -3 12.5 -1 12.5 4 C9 9.5 4 11 0 11 C-4 11 -9 9.5 -12.5 4 Z" stroke-width="2.2"/><path d="M-4 2 V5.5 M4 2 V5.5" stroke-width="2.4"/><path d="M-9.5 -2 C-6 0 -1.5 -1.5 0 -4.5 C1.5 -1.5 6 0 9.5 -2" stroke-width="2"/></svg>
<div class="t" style="top:1602.68px;font-size:24px;color:#ffffff;letter-spacing:0.724px;left:2390.00px;">Pixel 8 API 34 (android-arm64 emulator)</div>
<svg class="i" style="left:2878.0px;top:1598.0px" width="32" height="32" viewBox="-16.0 -16.0 32 32" fill="none" stroke="#ffffff" stroke-width="1.9" stroke-linejoin="round" stroke-linecap="round"><path d="M-10 7.6 L-8 -2 C-8 -8 -4 -11.5 0.5 -11.5 M7.2 0.5 L10 7.6 H-10"/><path d="M-3.2 8 a3.2 3.6 0 0 0 6.4 0 Z" fill="#fff" stroke="none"/><circle cx="7" cy="-7.3" r="5.2" fill="#fff" stroke="none"/></svg>
<svg class="i" style="left:1460px;top:20px" width="730" height="190" viewBox="1460 20 730 190"><ellipse cx="1821.3" cy="115.7" rx="346.2" ry="80.8" fill="none" stroke="#ff2500" stroke-width="5"/></svg>
</div>
</body></html>
